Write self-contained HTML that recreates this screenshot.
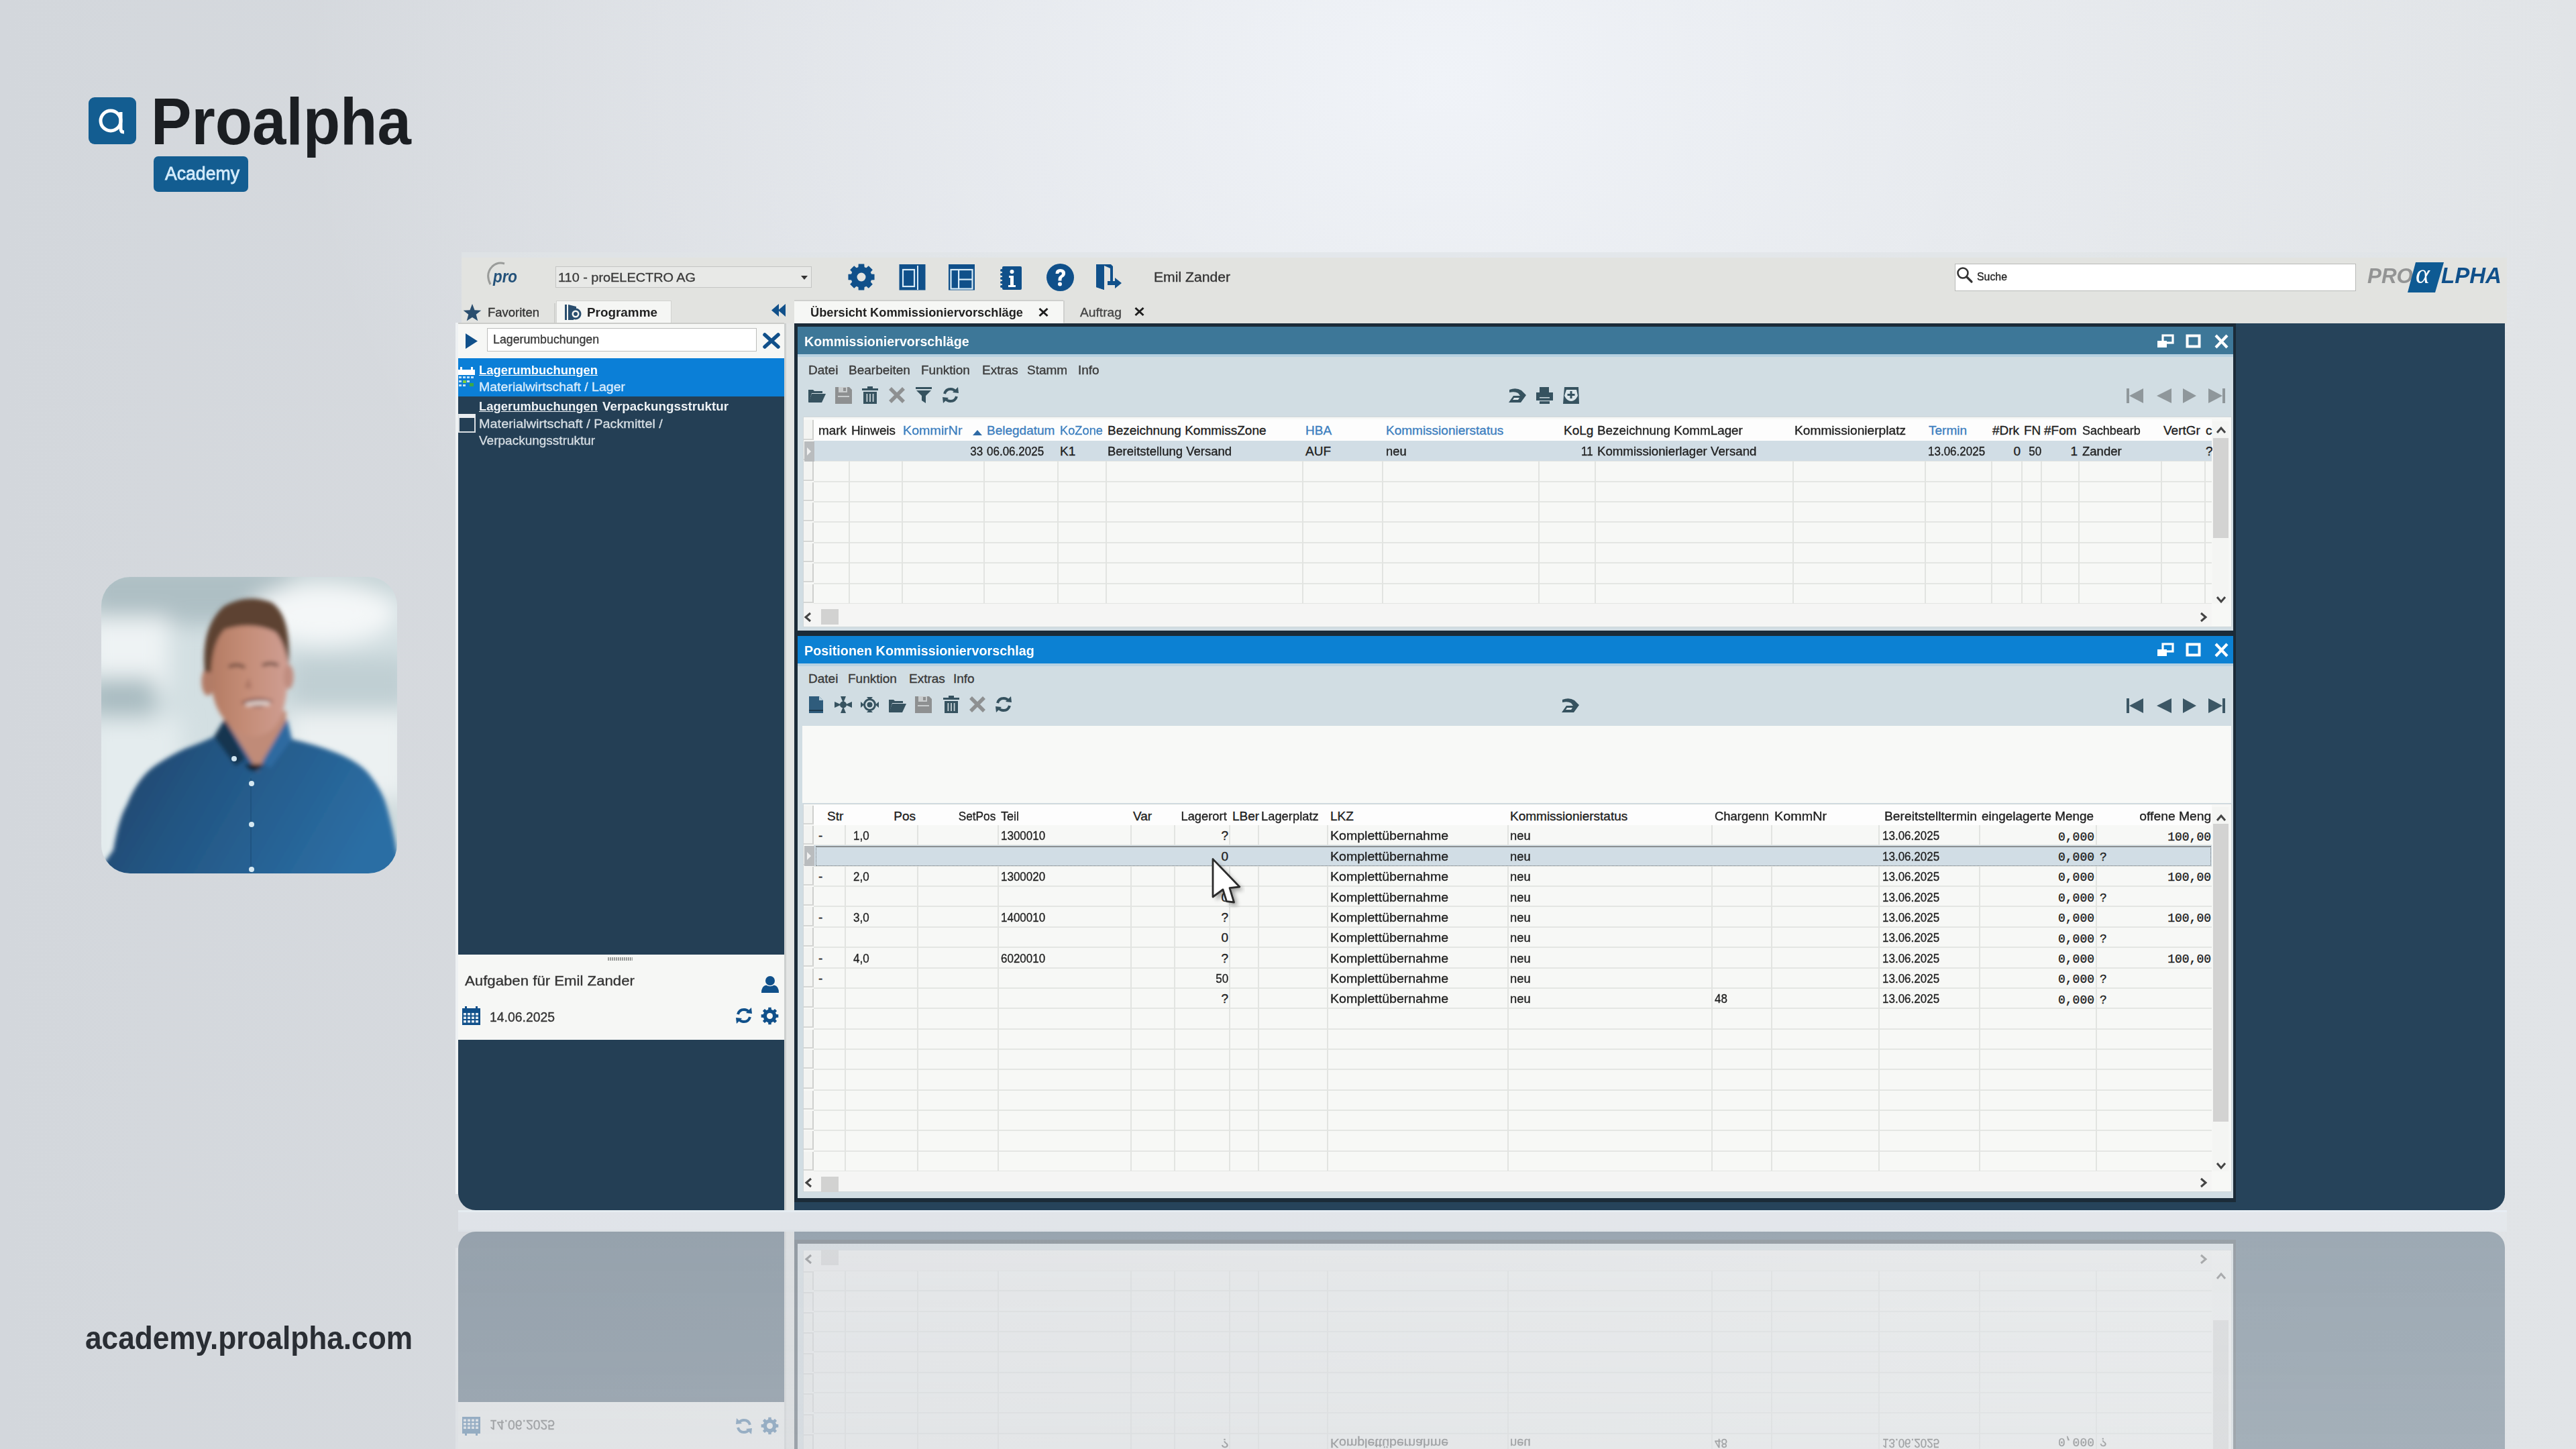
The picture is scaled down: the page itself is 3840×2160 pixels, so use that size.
<!DOCTYPE html><html><head><meta charset="utf-8"><style>
html,body{margin:0;padding:0;}
body{width:3840px;height:2160px;overflow:hidden;position:relative;
background:radial-gradient(ellipse 1700px 1300px at 2150px 120px,rgba(240,243,248,1) 0%,rgba(240,243,248,0) 100%),linear-gradient(90deg,#d3d7dc 0%,#d9dce0 35%,#dee1e4 70%,#e1e4e7 100%);
font-family:"Liberation Sans",sans-serif;}
.t{position:absolute;white-space:nowrap;line-height:1;color:#1e1e1e;-webkit-text-stroke:0.35px currentColor;}
.r{position:absolute;}
#app{position:absolute;left:0;top:0;width:3840px;height:1807px;}
#refl{position:absolute;left:0;top:1833px;width:3840px;height:327px;overflow:hidden;}
#refl .in{position:absolute;left:0;top:0;width:3840px;height:1807px;transform-origin:0 0;transform:translateY(1807px) scaleY(-1);opacity:.36;
-webkit-mask-image:linear-gradient(to bottom,rgba(0,0,0,.5) 0%,rgba(0,0,0,.88) 81%,#000 100%);mask-image:linear-gradient(to bottom,rgba(0,0,0,.5) 0%,rgba(0,0,0,.88) 81%,#000 100%);}
</style></head><body>
<div class="r" style="left:132px;top:145px;width:71px;height:70px;background:#135d91;border-radius:9px;"></div>
<svg class="r" style="left:132px;top:145px;" width="71" height="70" viewBox="0 0 71 70"><circle cx="33" cy="35" r="15" fill="none" stroke="#fff" stroke-width="5"/><path d="M48 22 V47 Q48 52 53 52" fill="none" stroke="#fff" stroke-width="5"/></svg>
<div class="t" style="top:132.0px;font-size:98px;left:225.0px;color:#1b1e22;font-weight:700;-webkit-text-stroke:0;transform:scaleX(0.925);transform-origin:left 0;">Proalpha</div>
<div class="r" style="left:229px;top:233px;width:141px;height:53px;background:#135d91;border-radius:7px;"></div>
<div class="t" style="top:246.1px;font-size:27px;left:246.0px;color:#d3ebfb;transform:scaleX(0.986);transform-origin:left 0;-webkit-text-stroke:0.8px #d3ebfb;">Academy</div>
<div class="t" style="top:1969.5px;font-size:49px;left:127.0px;color:#2a2e34;font-weight:700;-webkit-text-stroke:0;transform:scaleX(0.902);transform-origin:left 0;">academy.proalpha.com</div>
<svg class="r" style="left:151px;top:860px" width="441" height="442" viewBox="0 0 441 442">
<defs><clipPath id="vc"><rect x="0" y="0" width="441" height="442" rx="43"/></clipPath>
<filter id="bl" x="-20%" y="-20%" width="140%" height="140%"><feGaussianBlur stdDeviation="16"/></filter>
<filter id="bl2" x="-10%" y="-10%" width="120%" height="120%"><feGaussianBlur stdDeviation="3"/></filter>
<linearGradient id="sh" x1="0" y1="0" x2="1" y2="0.3"><stop offset="0" stop-color="#1c3f63"/><stop offset=".45" stop-color="#235684"/><stop offset="1" stop-color="#2b6ea4"/></linearGradient>
<linearGradient id="face" x1="0" y1="0" x2="1" y2="0"><stop offset="0" stop-color="#b27a62"/><stop offset=".45" stop-color="#c48c76"/><stop offset="1" stop-color="#cf9e93"/></linearGradient>
</defs>
<g clip-path="url(#vc)">
<rect x="0" y="0" width="441" height="442" fill="#d3dfe2"/>
<g filter="url(#bl)">
<rect x="-20" y="-20" width="300" height="90" fill="#aebfc4"/><rect x="280" y="-20" width="200" height="40" fill="#c5d3d6"/>
<rect x="-20" y="60" width="120" height="110" fill="#eef3f4"/>
<rect x="-20" y="150" width="100" height="60" fill="#a9bcc1"/>
<rect x="-20" y="210" width="140" height="240" fill="#e4ecee"/>
<ellipse cx="330" cy="55" rx="110" ry="45" fill="#f4f7f8"/>
<rect x="280" y="120" width="180" height="80" fill="#c0cfd3"/>
<rect x="280" y="200" width="180" height="140" fill="#ecf1f2"/>
<rect x="380" y="330" width="80" height="120" fill="#cfdadc"/>
</g>
<g filter="url(#bl2)">
<path d="M184 200 Q186 250 203 275 L233 292 L258 275 Q274 250 276 200 Z" fill="#c08b78"/>
<path d="M-20 460 L18 407 Q26 360 38 340 Q55 298 82 280 Q105 265 125 256 Q152 246 168 238 L184 212 L233 290 L277 212 L284 242 Q320 250 350 262 Q385 276 400 295 Q420 320 426 344 Q436 380 440 407 L460 460 Z" fill="url(#sh)"/>
<path d="M184 212 L168 238 L200 282 L215 272 Z" fill="#17344f"/>
<path d="M277 212 L284 242 L252 285 L240 275 Z" fill="#2f6ba0"/>
<path d="M213 279 Q227 300 242 279 Z" fill="#121c26"/>
<g transform="translate(220,0) scale(0.94,1) translate(-220,0)"><path d="M158 92 Q152 150 168 192 Q188 234 228 238 Q264 234 274 200 Q286 160 281 92 Q252 52 220 52 Q182 52 158 92 Z" fill="url(#face)"/>
<ellipse cx="155" cy="156" rx="10" ry="21" fill="#b27b66"/>
<ellipse cx="283" cy="149" rx="8" ry="18" fill="#c08d80"/>
<path d="M150 142 Q143 75 180 44 Q216 24 256 38 Q288 58 283 132 Q276 96 262 82 Q226 66 182 78 Q162 96 160 142 Z" fill="#5d4233"/>
</g><path d="M190 134 Q202 128 214 135" stroke="#5a3a30" stroke-width="4" fill="none"/>
<path d="M240 132 Q252 126 264 132" stroke="#5a3a30" stroke-width="4" fill="none"/>
<path d="M220 150 L224 165 Q218 168 214 164 Z" fill="#9e6a5a" opacity=".7"/>
<path d="M208 187 Q232 176 256 185 Q236 202 208 187 Z" fill="#6f3533"/>
<path d="M214 188 Q234 182 252 186 L250 192 Q234 190 216 193 Z" fill="#e5d6d0"/>
</g>
<rect x="222" y="300" width="2" height="150" fill="#1d4c78" opacity=".6"/>
<circle cx="198" cy="271" r="4" fill="#cfe3ee"/><circle cx="224" cy="308" r="4" fill="#d5e8f2"/><circle cx="224" cy="369" r="4" fill="#d5e8f2"/><circle cx="224" cy="436" r="4" fill="#d5e8f2"/>
</g></svg>
<div id="app">
<div class="r" style="left:688.0px;top:376.0px;width:3049.0px;height:8.0px;background:rgba(224,228,231,.7);"></div>
<div class="r" style="left:688.0px;top:384.0px;width:3049.0px;height:98.0px;background:#e2e3e0;"></div>
<div class="r" style="left:826.0px;top:452.0px;width:2.0px;height:29.0px;background:#cfd0cd;"></div>
<div class="r" style="left:829.0px;top:448.0px;width:172.0px;height:34.0px;background:#f5f6f4;border:1px solid #d2d3d0;border-bottom:none;box-sizing:border-box;"></div>
<div class="t" style="top:455.9px;font-size:19px;left:727.0px;color:#333;transform:scaleX(0.972);transform-origin:left 0;">Favoriten</div>
<div class="t" style="top:455.9px;font-size:19px;left:875.0px;color:#222;font-weight:700;-webkit-text-stroke:0;transform:scaleX(0.994);transform-origin:left 0;">Programme</div>
<div class="r" style="left:683.0px;top:481.0px;width:486.0px;height:53.0px;background:#f6f7f5;border-top:2px solid #cbccc9;box-sizing:border-box;"></div>
<div class="r" style="left:726.0px;top:489.0px;width:402.0px;height:35.0px;background:#ffffff;border:1px solid #bcbdbb;box-sizing:border-box;"></div>
<div class="t" style="top:496.8px;font-size:18px;left:735.0px;color:#3a3a3a;transform:scaleX(0.987);transform-origin:left 0;">Lagerumbuchungen</div>
<div class="r" style="left:683.0px;top:534.0px;width:486.0px;height:57.0px;background:#0b7fd7;"></div>
<div class="t" style="top:541.9px;font-size:19px;left:714.0px;color:#ffffff;font-weight:700;-webkit-text-stroke:0;transform:scaleX(0.969);transform-origin:left 0;text-decoration:underline;">Lagerumbuchungen</div>
<div class="t" style="top:566.9px;font-size:19px;left:714.0px;color:#d8ebfb;transform:scaleX(1.027);transform-origin:left 0;">Materialwirtschaft / Lager</div>
<div class="r" style="left:683.0px;top:591.0px;width:486.0px;height:832.0px;background:#243f55;"></div>
<div class="t" style="top:595.9px;font-size:19px;left:714.0px;color:#eef2f5;font-weight:700;-webkit-text-stroke:0;transform:scaleX(0.969);transform-origin:left 0;text-decoration:underline;">Lagerumbuchungen</div>
<div class="t" style="top:595.9px;font-size:19px;left:898.0px;color:#eef2f5;font-weight:700;-webkit-text-stroke:0;transform:scaleX(0.989);transform-origin:left 0;">Verpackungsstruktur</div>
<div class="t" style="top:621.9px;font-size:19px;left:714.0px;color:#d5dde3;transform:scaleX(1.046);transform-origin:left 0;">Materialwirtschaft / Packmittel /</div>
<div class="t" style="top:646.9px;font-size:19px;left:714.0px;color:#d5dde3;">Verpackungsstruktur</div>
<div class="r" style="left:683.0px;top:1423.0px;width:486.0px;height:127.0px;background:#f6f7f5;"></div>
<div class="r" style="left:906.0px;top:1427.0px;width:37.0px;height:5.0px;background:repeating-linear-gradient(90deg,#9a9c9a 0 2px,transparent 2px 3px);"></div>
<div class="t" style="top:1451.2px;font-size:21px;left:693.0px;color:#333;transform:scaleX(1.057);transform-origin:left 0;">Aufgaben für Emil Zander</div>
<div class="t" style="top:1506.1px;font-size:20px;left:730.0px;color:#333;transform:scaleX(0.969);transform-origin:left 0;">14.06.2025</div>
<div class="r" style="left:683.0px;top:1550.0px;width:486.0px;height:254.0px;background:#243f55;border-bottom-left-radius:26px;"></div>
<div class="r" style="left:679.0px;top:481.0px;width:4.0px;height:1299.0px;background:rgba(246,248,250,.75);"></div>
<div class="r" style="left:1169.0px;top:482.0px;width:3.0px;height:1322.0px;background:#cdd0cf;"></div>
<div class="r" style="left:1172.0px;top:482.0px;width:12.0px;height:1322.0px;background:#e3e5e4;"></div>
<div class="r" style="left:1184.0px;top:482.0px;width:2550.0px;height:1322.0px;background:#26435a;border-bottom-right-radius:24px;"></div>
<div class="r" style="left:1184.0px;top:448.0px;width:401.0px;height:34.0px;background:#f6f7f5;"></div>
<div class="r" style="left:1184.0px;top:447.0px;width:401.0px;height:2.0px;background:#cfd0ce;"></div>
<div class="r" style="left:1585.0px;top:448.0px;width:2.0px;height:33.0px;background:#cfd0ce;"></div>
<div class="t" style="top:455.9px;font-size:19px;left:1208.0px;color:#222;font-weight:700;-webkit-text-stroke:0;transform:scaleX(0.959);transform-origin:left 0;">Übersicht Kommissioniervorschläge</div>
<div class="t" style="top:455.9px;font-size:19px;left:1610.0px;color:#444;transform:scaleX(1.012);transform-origin:left 0;">Auftrag</div>
<div class="r" style="left:828.0px;top:397.0px;width:382.0px;height:32.0px;background:#e8e9e7;border:1px solid #c4c5c3;box-sizing:border-box;"></div>
<div class="t" style="top:404.4px;font-size:19px;left:832.0px;color:#3b3b3b;transform:scaleX(1.046);transform-origin:left 0;">110 - proELECTRO AG</div>
<div class="t" style="top:403.1px;font-size:20px;left:1720.0px;color:#333;transform:scaleX(1.057);transform-origin:left 0;">Emil Zander</div>
<div class="r" style="left:2914.0px;top:393.0px;width:598.0px;height:41.0px;background:#ffffff;border:1px solid #b9bab8;box-sizing:border-box;"></div>
<div class="t" style="top:403.6px;font-size:17px;left:2947.0px;color:#222;transform:scaleX(0.934);transform-origin:left 0;">Suche</div>
<div class="r" style="left:1184.0px;top:482.0px;width:2149.0px;height:466.0px;background:#1b2b38;"></div>
<div class="r" style="left:1189.0px;top:487.0px;width:2140.0px;height:453.0px;background:#d1dde3;"></div>
<div class="r" style="left:1189.0px;top:487.0px;width:2140.0px;height:41.0px;background:#3d7798;"></div>
<div class="r" style="left:1189.0px;top:528.0px;width:2140.0px;height:4.0px;background:#b7d1e1;"></div>
<div class="t" style="top:499.1px;font-size:20px;left:1199.0px;color:#ffffff;font-weight:700;-webkit-text-stroke:0;transform:scaleX(0.982);transform-origin:left 0;">Kommissioniervorschläge</div>
<div class="r" style="left:1184.0px;top:943.0px;width:2149.0px;height:849.0px;background:#1b2b38;"></div>
<div class="r" style="left:1189.0px;top:948.0px;width:2140.0px;height:838.0px;background:#d1dde3;"></div>
<div class="r" style="left:1189.0px;top:948.0px;width:2140.0px;height:41.0px;background:#0c81d3;"></div>
<div class="r" style="left:1189.0px;top:989.0px;width:2140.0px;height:4.0px;background:#b7d1e1;"></div>
<div class="t" style="top:960.1px;font-size:20px;left:1199.0px;color:#ffffff;font-weight:700;-webkit-text-stroke:0;transform:scaleX(0.989);transform-origin:left 0;">Positionen Kommissioniervorschlag</div>
<div class="r" style="left:683.0px;top:1804.0px;width:3054.0px;height:3.0px;background:rgba(232,238,244,.85);"></div>
<div class="r" style="left:683.0px;top:1807.0px;width:3054.0px;height:26.0px;background:rgba(232,235,240,.55);"></div>
<div class="t" style="top:541.9px;font-size:19px;left:1205.0px;color:#3a3a3a;">Datei</div>
<div class="t" style="top:541.9px;font-size:19px;left:1265.0px;color:#3a3a3a;">Bearbeiten</div>
<div class="t" style="top:541.9px;font-size:19px;left:1373.0px;color:#3a3a3a;">Funktion</div>
<div class="t" style="top:541.9px;font-size:19px;left:1464.0px;color:#3a3a3a;">Extras</div>
<div class="t" style="top:541.9px;font-size:19px;left:1531.0px;color:#3a3a3a;">Stamm</div>
<div class="t" style="top:541.9px;font-size:19px;left:1607.0px;color:#3a3a3a;">Info</div>
<div class="t" style="top:1001.9px;font-size:19px;left:1205.0px;color:#3a3a3a;">Datei</div>
<div class="t" style="top:1001.9px;font-size:19px;left:1264.0px;color:#3a3a3a;">Funktion</div>
<div class="t" style="top:1001.9px;font-size:19px;left:1355.0px;color:#3a3a3a;">Extras</div>
<div class="t" style="top:1001.9px;font-size:19px;left:1421.0px;color:#3a3a3a;">Info</div>
<div class="r" style="left:1197.0px;top:621.0px;width:2130.0px;height:314.0px;background:#f7f8f6;border:1px solid #cfd6d9;box-sizing:border-box;"></div>
<div class="r" style="left:1213.0px;top:625.0px;width:2084.0px;height:32.0px;background:#fdfdfd;"></div>
<div class="r" style="left:1198.0px;top:626.0px;width:15.0px;height:30.0px;background:#f3f4f2;border-right:2px solid #cfd0ce;border-bottom:2px solid #d6d7d5;box-sizing:border-box;"></div>
<div class="r" style="left:1198.0px;top:658.0px;width:15.0px;height:28.4px;background:#f3f4f2;border-right:2px solid #cfd0ce;border-bottom:2px solid #d6d7d5;box-sizing:border-box;"></div>
<div class="r" style="left:1198.0px;top:688.4px;width:15.0px;height:28.4px;background:#f3f4f2;border-right:2px solid #cfd0ce;border-bottom:2px solid #d6d7d5;box-sizing:border-box;"></div>
<div class="r" style="left:1198.0px;top:718.7px;width:15.0px;height:28.4px;background:#f3f4f2;border-right:2px solid #cfd0ce;border-bottom:2px solid #d6d7d5;box-sizing:border-box;"></div>
<div class="r" style="left:1198.0px;top:749.0px;width:15.0px;height:28.4px;background:#f3f4f2;border-right:2px solid #cfd0ce;border-bottom:2px solid #d6d7d5;box-sizing:border-box;"></div>
<div class="r" style="left:1198.0px;top:779.4px;width:15.0px;height:28.4px;background:#f3f4f2;border-right:2px solid #cfd0ce;border-bottom:2px solid #d6d7d5;box-sizing:border-box;"></div>
<div class="r" style="left:1198.0px;top:809.8px;width:15.0px;height:28.4px;background:#f3f4f2;border-right:2px solid #cfd0ce;border-bottom:2px solid #d6d7d5;box-sizing:border-box;"></div>
<div class="r" style="left:1198.0px;top:840.1px;width:15.0px;height:28.4px;background:#f3f4f2;border-right:2px solid #cfd0ce;border-bottom:2px solid #d6d7d5;box-sizing:border-box;"></div>
<div class="r" style="left:1198.0px;top:870.5px;width:15.0px;height:28.4px;background:#f3f4f2;border-right:2px solid #cfd0ce;border-bottom:2px solid #d6d7d5;box-sizing:border-box;"></div>
<div class="r" style="left:1213.0px;top:686.4px;width:2084.0px;height:2.0px;background:#e4e6e3;"></div>
<div class="r" style="left:1213.0px;top:716.7px;width:2084.0px;height:2.0px;background:#e4e6e3;"></div>
<div class="r" style="left:1213.0px;top:747.0px;width:2084.0px;height:2.0px;background:#e4e6e3;"></div>
<div class="r" style="left:1213.0px;top:777.4px;width:2084.0px;height:2.0px;background:#e4e6e3;"></div>
<div class="r" style="left:1213.0px;top:807.8px;width:2084.0px;height:2.0px;background:#e4e6e3;"></div>
<div class="r" style="left:1213.0px;top:838.1px;width:2084.0px;height:2.0px;background:#e4e6e3;"></div>
<div class="r" style="left:1213.0px;top:868.5px;width:2084.0px;height:2.0px;background:#e4e6e3;"></div>
<div class="r" style="left:1213.0px;top:898.8px;width:2084.0px;height:2.0px;background:#e4e6e3;"></div>
<div class="r" style="left:1265.0px;top:657.0px;width:2.0px;height:242.8px;background:#e2e4e1;"></div>
<div class="r" style="left:1344.0px;top:657.0px;width:2.0px;height:242.8px;background:#e2e4e1;"></div>
<div class="r" style="left:1466.0px;top:657.0px;width:2.0px;height:242.8px;background:#e2e4e1;"></div>
<div class="r" style="left:1576.0px;top:657.0px;width:2.0px;height:242.8px;background:#e2e4e1;"></div>
<div class="r" style="left:1648.0px;top:657.0px;width:2.0px;height:242.8px;background:#e2e4e1;"></div>
<div class="r" style="left:1941.0px;top:657.0px;width:2.0px;height:242.8px;background:#e2e4e1;"></div>
<div class="r" style="left:2060.0px;top:657.0px;width:2.0px;height:242.8px;background:#e2e4e1;"></div>
<div class="r" style="left:2293.0px;top:657.0px;width:2.0px;height:242.8px;background:#e2e4e1;"></div>
<div class="r" style="left:2377.0px;top:657.0px;width:2.0px;height:242.8px;background:#e2e4e1;"></div>
<div class="r" style="left:2672.0px;top:657.0px;width:2.0px;height:242.8px;background:#e2e4e1;"></div>
<div class="r" style="left:2869.0px;top:657.0px;width:2.0px;height:242.8px;background:#e2e4e1;"></div>
<div class="r" style="left:2968.0px;top:657.0px;width:2.0px;height:242.8px;background:#e2e4e1;"></div>
<div class="r" style="left:3013.0px;top:657.0px;width:2.0px;height:242.8px;background:#e2e4e1;"></div>
<div class="r" style="left:3042.0px;top:657.0px;width:2.0px;height:242.8px;background:#e2e4e1;"></div>
<div class="r" style="left:3098.0px;top:657.0px;width:2.0px;height:242.8px;background:#e2e4e1;"></div>
<div class="r" style="left:3221.0px;top:657.0px;width:2.0px;height:242.8px;background:#e2e4e1;"></div>
<div class="r" style="left:3286.0px;top:657.0px;width:2.0px;height:242.8px;background:#e2e4e1;"></div>
<div class="r" style="left:1213.0px;top:657.0px;width:2084.0px;height:30.4px;background:#d1dde5;"></div>
<div class="t" style="top:631.9px;font-size:19px;left:1220.0px;transform:scaleX(0.995);transform-origin:left 0;">mark</div>
<div class="t" style="top:631.9px;font-size:19px;left:1269.0px;transform:scaleX(0.992);transform-origin:left 0;">Hinweis</div>
<div class="t" style="top:631.9px;font-size:19px;left:1346.0px;color:#3d7fbf;transform:scaleX(1.037);transform-origin:left 0;">KommirNr</div>
<div class="t" style="top:631.9px;font-size:19px;left:1471.0px;color:#3d7fbf;">Belegdatum</div>
<div class="t" style="top:631.9px;font-size:19px;left:1580.0px;color:#3d7fbf;transform:scaleX(0.962);transform-origin:left 0;">KoZone</div>
<div class="t" style="top:631.9px;font-size:19px;left:1651.0px;">Bezeichnung KommissZone</div>
<div class="t" style="top:631.9px;font-size:19px;left:1946.0px;color:#3d7fbf;">HBA</div>
<div class="t" style="top:631.9px;font-size:19px;left:2066.0px;color:#3d7fbf;">Kommissionierstatus</div>
<div class="t" style="top:631.9px;font-size:19px;left:2331.0px;">KoLg</div>
<div class="t" style="top:631.9px;font-size:19px;left:2381.0px;transform:scaleX(0.992);transform-origin:left 0;">Bezeichnung KommLager</div>
<div class="t" style="top:631.9px;font-size:19px;left:2675.0px;transform:scaleX(1.008);transform-origin:left 0;">Kommissionierplatz</div>
<div class="t" style="top:631.9px;font-size:19px;left:2875.0px;color:#3d7fbf;">Termin</div>
<div class="t" style="top:631.9px;font-size:19px;left:2970.0px;">#Drk</div>
<div class="t" style="top:631.9px;font-size:19px;left:3017.0px;">FN</div>
<div class="t" style="top:631.9px;font-size:19px;left:3047.0px;">#Fom</div>
<div class="t" style="top:631.9px;font-size:19px;left:3104.0px;transform:scaleX(0.943);transform-origin:left 0;">Sachbearb</div>
<div class="t" style="top:631.9px;font-size:19px;left:3225.0px;">VertGr</div>
<div class="t" style="top:631.9px;font-size:19px;left:3288.0px;">c</div>
<div class="t" style="top:663.4px;font-size:19px;right:2375.0px;transform:scaleX(0.895);transform-origin:right 0;">33</div>
<div class="t" style="top:663.4px;font-size:19px;left:1471.0px;transform:scaleX(0.895);transform-origin:left 0;">06.06.2025</div>
<div class="t" style="top:663.4px;font-size:19px;left:1580.0px;">K1</div>
<div class="t" style="top:663.4px;font-size:19px;left:1651.0px;transform:scaleX(0.973);transform-origin:left 0;">Bereitstellung Versand</div>
<div class="t" style="top:663.4px;font-size:19px;left:1946.0px;">AUF</div>
<div class="t" style="top:663.4px;font-size:19px;left:2066.0px;transform:scaleX(0.965);transform-origin:left 0;">neu</div>
<div class="t" style="top:663.4px;font-size:19px;right:1465.0px;transform:scaleX(0.895);transform-origin:right 0;">11</div>
<div class="t" style="top:663.4px;font-size:19px;left:2381.0px;transform:scaleX(0.982);transform-origin:left 0;">Kommissionierlager Versand</div>
<div class="t" style="top:663.4px;font-size:19px;left:2874.0px;transform:scaleX(0.895);transform-origin:left 0;">13.06.2025</div>
<div class="t" style="top:663.4px;font-size:19px;right:828.0px;">0</div>
<div class="t" style="top:663.4px;font-size:19px;right:797.0px;transform:scaleX(0.895);transform-origin:right 0;">50</div>
<div class="t" style="top:663.4px;font-size:19px;right:743.0px;">1</div>
<div class="t" style="top:663.4px;font-size:19px;left:3104.0px;transform:scaleX(0.975);transform-origin:left 0;">Zander</div>
<div class="t" style="top:663.4px;font-size:19px;left:3288.0px;">?</div>
<div class="r" style="left:3298.0px;top:628.0px;width:24.0px;height:271.8px;background:#f4f5f3;"></div>
<div class="r" style="left:3299.0px;top:653.0px;width:23.0px;height:149.0px;background:#d3d3d2;"></div>
<div class="r" style="left:1198.0px;top:899.8px;width:2099.0px;height:33.2px;background:#f5f5f4;"></div>
<div class="r" style="left:1224.0px;top:907.8px;width:26.0px;height:23.0px;background:#d2d2d1;"></div>
<div class="r" style="left:1196.0px;top:1082.0px;width:2130.0px;height:115.0px;background:#f8f9f7;"></div>
<div class="r" style="left:1197.0px;top:1198.0px;width:2130.0px;height:579.0px;background:#f7f8f6;border:1px solid #cfd6d9;box-sizing:border-box;"></div>
<div class="r" style="left:1213.0px;top:1200.0px;width:2084.0px;height:30.0px;background:#fdfdfd;"></div>
<div class="r" style="left:1198.0px;top:1201.0px;width:15.0px;height:28.0px;background:#f3f4f2;border-right:2px solid #cfd0ce;border-bottom:2px solid #d6d7d5;box-sizing:border-box;"></div>
<div class="r" style="left:1198.0px;top:1231.0px;width:15.0px;height:28.3px;background:#f3f4f2;border-right:2px solid #cfd0ce;border-bottom:2px solid #d6d7d5;box-sizing:border-box;"></div>
<div class="r" style="left:1198.0px;top:1261.3px;width:15.0px;height:28.3px;background:#f3f4f2;border-right:2px solid #cfd0ce;border-bottom:2px solid #d6d7d5;box-sizing:border-box;"></div>
<div class="r" style="left:1198.0px;top:1291.7px;width:15.0px;height:28.3px;background:#f3f4f2;border-right:2px solid #cfd0ce;border-bottom:2px solid #d6d7d5;box-sizing:border-box;"></div>
<div class="r" style="left:1198.0px;top:1322.0px;width:15.0px;height:28.3px;background:#f3f4f2;border-right:2px solid #cfd0ce;border-bottom:2px solid #d6d7d5;box-sizing:border-box;"></div>
<div class="r" style="left:1198.0px;top:1352.4px;width:15.0px;height:28.3px;background:#f3f4f2;border-right:2px solid #cfd0ce;border-bottom:2px solid #d6d7d5;box-sizing:border-box;"></div>
<div class="r" style="left:1198.0px;top:1382.8px;width:15.0px;height:28.3px;background:#f3f4f2;border-right:2px solid #cfd0ce;border-bottom:2px solid #d6d7d5;box-sizing:border-box;"></div>
<div class="r" style="left:1198.0px;top:1413.1px;width:15.0px;height:28.3px;background:#f3f4f2;border-right:2px solid #cfd0ce;border-bottom:2px solid #d6d7d5;box-sizing:border-box;"></div>
<div class="r" style="left:1198.0px;top:1443.5px;width:15.0px;height:28.3px;background:#f3f4f2;border-right:2px solid #cfd0ce;border-bottom:2px solid #d6d7d5;box-sizing:border-box;"></div>
<div class="r" style="left:1198.0px;top:1473.8px;width:15.0px;height:28.3px;background:#f3f4f2;border-right:2px solid #cfd0ce;border-bottom:2px solid #d6d7d5;box-sizing:border-box;"></div>
<div class="r" style="left:1198.0px;top:1504.2px;width:15.0px;height:28.3px;background:#f3f4f2;border-right:2px solid #cfd0ce;border-bottom:2px solid #d6d7d5;box-sizing:border-box;"></div>
<div class="r" style="left:1198.0px;top:1534.5px;width:15.0px;height:28.3px;background:#f3f4f2;border-right:2px solid #cfd0ce;border-bottom:2px solid #d6d7d5;box-sizing:border-box;"></div>
<div class="r" style="left:1198.0px;top:1564.8px;width:15.0px;height:28.3px;background:#f3f4f2;border-right:2px solid #cfd0ce;border-bottom:2px solid #d6d7d5;box-sizing:border-box;"></div>
<div class="r" style="left:1198.0px;top:1595.2px;width:15.0px;height:28.3px;background:#f3f4f2;border-right:2px solid #cfd0ce;border-bottom:2px solid #d6d7d5;box-sizing:border-box;"></div>
<div class="r" style="left:1198.0px;top:1625.5px;width:15.0px;height:28.3px;background:#f3f4f2;border-right:2px solid #cfd0ce;border-bottom:2px solid #d6d7d5;box-sizing:border-box;"></div>
<div class="r" style="left:1198.0px;top:1655.9px;width:15.0px;height:28.3px;background:#f3f4f2;border-right:2px solid #cfd0ce;border-bottom:2px solid #d6d7d5;box-sizing:border-box;"></div>
<div class="r" style="left:1198.0px;top:1686.2px;width:15.0px;height:28.3px;background:#f3f4f2;border-right:2px solid #cfd0ce;border-bottom:2px solid #d6d7d5;box-sizing:border-box;"></div>
<div class="r" style="left:1198.0px;top:1716.6px;width:15.0px;height:28.3px;background:#f3f4f2;border-right:2px solid #cfd0ce;border-bottom:2px solid #d6d7d5;box-sizing:border-box;"></div>
<div class="r" style="left:1213.0px;top:1259.3px;width:2084.0px;height:2.0px;background:#e4e6e3;"></div>
<div class="r" style="left:1213.0px;top:1289.7px;width:2084.0px;height:2.0px;background:#e4e6e3;"></div>
<div class="r" style="left:1213.0px;top:1320.0px;width:2084.0px;height:2.0px;background:#e4e6e3;"></div>
<div class="r" style="left:1213.0px;top:1350.4px;width:2084.0px;height:2.0px;background:#e4e6e3;"></div>
<div class="r" style="left:1213.0px;top:1380.8px;width:2084.0px;height:2.0px;background:#e4e6e3;"></div>
<div class="r" style="left:1213.0px;top:1411.1px;width:2084.0px;height:2.0px;background:#e4e6e3;"></div>
<div class="r" style="left:1213.0px;top:1441.5px;width:2084.0px;height:2.0px;background:#e4e6e3;"></div>
<div class="r" style="left:1213.0px;top:1471.8px;width:2084.0px;height:2.0px;background:#e4e6e3;"></div>
<div class="r" style="left:1213.0px;top:1502.2px;width:2084.0px;height:2.0px;background:#e4e6e3;"></div>
<div class="r" style="left:1213.0px;top:1532.5px;width:2084.0px;height:2.0px;background:#e4e6e3;"></div>
<div class="r" style="left:1213.0px;top:1562.8px;width:2084.0px;height:2.0px;background:#e4e6e3;"></div>
<div class="r" style="left:1213.0px;top:1593.2px;width:2084.0px;height:2.0px;background:#e4e6e3;"></div>
<div class="r" style="left:1213.0px;top:1623.5px;width:2084.0px;height:2.0px;background:#e4e6e3;"></div>
<div class="r" style="left:1213.0px;top:1653.9px;width:2084.0px;height:2.0px;background:#e4e6e3;"></div>
<div class="r" style="left:1213.0px;top:1684.2px;width:2084.0px;height:2.0px;background:#e4e6e3;"></div>
<div class="r" style="left:1213.0px;top:1714.6px;width:2084.0px;height:2.0px;background:#e4e6e3;"></div>
<div class="r" style="left:1213.0px;top:1745.0px;width:2084.0px;height:2.0px;background:#e4e6e3;"></div>
<div class="r" style="left:1259.0px;top:1230.0px;width:2.0px;height:516.0px;background:#e2e4e1;"></div>
<div class="r" style="left:1367.0px;top:1230.0px;width:2.0px;height:516.0px;background:#e2e4e1;"></div>
<div class="r" style="left:1487.0px;top:1230.0px;width:2.0px;height:516.0px;background:#e2e4e1;"></div>
<div class="r" style="left:1685.0px;top:1230.0px;width:2.0px;height:516.0px;background:#e2e4e1;"></div>
<div class="r" style="left:1750.0px;top:1230.0px;width:2.0px;height:516.0px;background:#e2e4e1;"></div>
<div class="r" style="left:1832.0px;top:1230.0px;width:2.0px;height:516.0px;background:#e2e4e1;"></div>
<div class="r" style="left:1875.0px;top:1230.0px;width:2.0px;height:516.0px;background:#e2e4e1;"></div>
<div class="r" style="left:1978.0px;top:1230.0px;width:2.0px;height:516.0px;background:#e2e4e1;"></div>
<div class="r" style="left:2247.0px;top:1230.0px;width:2.0px;height:516.0px;background:#e2e4e1;"></div>
<div class="r" style="left:2551.0px;top:1230.0px;width:2.0px;height:516.0px;background:#e2e4e1;"></div>
<div class="r" style="left:2640.0px;top:1230.0px;width:2.0px;height:516.0px;background:#e2e4e1;"></div>
<div class="r" style="left:2800.0px;top:1230.0px;width:2.0px;height:516.0px;background:#e2e4e1;"></div>
<div class="r" style="left:2950.0px;top:1230.0px;width:2.0px;height:516.0px;background:#e2e4e1;"></div>
<div class="r" style="left:3124.0px;top:1230.0px;width:2.0px;height:516.0px;background:#e2e4e1;"></div>
<div class="r" style="left:1213.0px;top:1260.3px;width:2084.0px;height:30.4px;background:#d1dde5;"></div>
<div class="t" style="top:1206.9px;font-size:19px;left:1233.0px;">Str</div>
<div class="t" style="top:1206.9px;font-size:19px;right:2475.0px;">Pos</div>
<div class="t" style="top:1206.9px;font-size:19px;right:2356.0px;transform:scaleX(0.908);transform-origin:right 0;">SetPos</div>
<div class="t" style="top:1206.9px;font-size:19px;left:1492.0px;transform:scaleX(0.947);transform-origin:left 0;">Teil</div>
<div class="t" style="top:1206.9px;font-size:19px;left:1689.0px;">Var</div>
<div class="t" style="top:1206.9px;font-size:19px;right:2011.0px;transform:scaleX(0.965);transform-origin:right 0;">Lagerort</div>
<div class="t" style="top:1206.9px;font-size:19px;left:1837.0px;">LBer</div>
<div class="t" style="top:1206.9px;font-size:19px;left:1880.0px;transform:scaleX(0.966);transform-origin:left 0;">Lagerplatz</div>
<div class="t" style="top:1206.9px;font-size:19px;left:1983.0px;">LKZ</div>
<div class="t" style="top:1206.9px;font-size:19px;left:2251.0px;">Kommissionierstatus</div>
<div class="t" style="top:1206.9px;font-size:19px;left:2556.0px;transform:scaleX(0.971);transform-origin:left 0;">Chargenn</div>
<div class="t" style="top:1206.9px;font-size:19px;left:2645.0px;transform:scaleX(1.041);transform-origin:left 0;">KommNr</div>
<div class="t" style="top:1206.9px;font-size:19px;left:2809.0px;transform:scaleX(1.013);transform-origin:left 0;">Bereitstelltermin</div>
<div class="t" style="top:1206.9px;font-size:19px;left:2954.0px;transform:scaleX(0.994);transform-origin:left 0;">eingelagerte Menge</div>
<div class="t" style="top:1206.9px;font-size:19px;right:544.0px;transform:scaleX(1.016);transform-origin:right 0;">offene Meng</div>
<div class="t" style="top:1236.4px;font-size:19px;left:1220.0px;">-</div>
<div class="t" style="top:1236.4px;font-size:19px;left:1272.0px;transform:scaleX(0.895);transform-origin:left 0;">1,0</div>
<div class="t" style="top:1236.4px;font-size:19px;left:1492.0px;transform:scaleX(0.895);transform-origin:left 0;">1300010</div>
<div class="t" style="top:1236.4px;font-size:19px;right:2009.0px;">?</div>
<div class="t" style="top:1236.4px;font-size:19px;left:1983.0px;transform:scaleX(1.029);transform-origin:left 0;">Komplettübernahme</div>
<div class="t" style="top:1236.4px;font-size:19px;left:2251.0px;transform:scaleX(0.965);transform-origin:left 0;">neu</div>
<div class="t" style="top:1236.4px;font-size:19px;left:2806.0px;transform:scaleX(0.895);transform-origin:left 0;">13.06.2025</div>
<div class="t" style="top:1238.7px;font-size:18px;right:718.0px;font-family:'Liberation Mono',monospace;">0,000</div>
<div class="t" style="top:1238.7px;font-size:18px;right:544.0px;font-family:'Liberation Mono',monospace;">100,00</div>
<div class="t" style="top:1266.8px;font-size:19px;right:2009.0px;">0</div>
<div class="t" style="top:1266.8px;font-size:19px;left:1983.0px;transform:scaleX(1.029);transform-origin:left 0;">Komplettübernahme</div>
<div class="t" style="top:1266.8px;font-size:19px;left:2251.0px;transform:scaleX(0.965);transform-origin:left 0;">neu</div>
<div class="t" style="top:1266.8px;font-size:19px;left:2806.0px;transform:scaleX(0.895);transform-origin:left 0;">13.06.2025</div>
<div class="t" style="top:1269.1px;font-size:18px;right:718.0px;font-family:'Liberation Mono',monospace;">0,000</div>
<div class="t" style="top:1269.1px;font-size:18px;left:3130.0px;font-family:'Liberation Mono',monospace;">?</div>
<div class="t" style="top:1297.1px;font-size:19px;left:1220.0px;">-</div>
<div class="t" style="top:1297.1px;font-size:19px;left:1272.0px;transform:scaleX(0.895);transform-origin:left 0;">2,0</div>
<div class="t" style="top:1297.1px;font-size:19px;left:1492.0px;transform:scaleX(0.895);transform-origin:left 0;">1300020</div>
<div class="t" style="top:1297.1px;font-size:19px;left:1983.0px;transform:scaleX(1.029);transform-origin:left 0;">Komplettübernahme</div>
<div class="t" style="top:1297.1px;font-size:19px;left:2251.0px;transform:scaleX(0.965);transform-origin:left 0;">neu</div>
<div class="t" style="top:1297.1px;font-size:19px;left:2806.0px;transform:scaleX(0.895);transform-origin:left 0;">13.06.2025</div>
<div class="t" style="top:1299.4px;font-size:18px;right:718.0px;font-family:'Liberation Mono',monospace;">0,000</div>
<div class="t" style="top:1299.4px;font-size:18px;right:544.0px;font-family:'Liberation Mono',monospace;">100,00</div>
<div class="t" style="top:1327.5px;font-size:19px;right:2009.0px;">0</div>
<div class="t" style="top:1327.5px;font-size:19px;left:1983.0px;transform:scaleX(1.029);transform-origin:left 0;">Komplettübernahme</div>
<div class="t" style="top:1327.5px;font-size:19px;left:2251.0px;transform:scaleX(0.965);transform-origin:left 0;">neu</div>
<div class="t" style="top:1327.5px;font-size:19px;left:2806.0px;transform:scaleX(0.895);transform-origin:left 0;">13.06.2025</div>
<div class="t" style="top:1329.8px;font-size:18px;right:718.0px;font-family:'Liberation Mono',monospace;">0,000</div>
<div class="t" style="top:1329.8px;font-size:18px;left:3130.0px;font-family:'Liberation Mono',monospace;">?</div>
<div class="t" style="top:1357.8px;font-size:19px;left:1220.0px;">-</div>
<div class="t" style="top:1357.8px;font-size:19px;left:1272.0px;transform:scaleX(0.895);transform-origin:left 0;">3,0</div>
<div class="t" style="top:1357.8px;font-size:19px;left:1492.0px;transform:scaleX(0.895);transform-origin:left 0;">1400010</div>
<div class="t" style="top:1357.8px;font-size:19px;right:2009.0px;">?</div>
<div class="t" style="top:1357.8px;font-size:19px;left:1983.0px;transform:scaleX(1.029);transform-origin:left 0;">Komplettübernahme</div>
<div class="t" style="top:1357.8px;font-size:19px;left:2251.0px;transform:scaleX(0.965);transform-origin:left 0;">neu</div>
<div class="t" style="top:1357.8px;font-size:19px;left:2806.0px;transform:scaleX(0.895);transform-origin:left 0;">13.06.2025</div>
<div class="t" style="top:1360.1px;font-size:18px;right:718.0px;font-family:'Liberation Mono',monospace;">0,000</div>
<div class="t" style="top:1360.1px;font-size:18px;right:544.0px;font-family:'Liberation Mono',monospace;">100,00</div>
<div class="t" style="top:1388.2px;font-size:19px;right:2009.0px;">0</div>
<div class="t" style="top:1388.2px;font-size:19px;left:1983.0px;transform:scaleX(1.029);transform-origin:left 0;">Komplettübernahme</div>
<div class="t" style="top:1388.2px;font-size:19px;left:2251.0px;transform:scaleX(0.965);transform-origin:left 0;">neu</div>
<div class="t" style="top:1388.2px;font-size:19px;left:2806.0px;transform:scaleX(0.895);transform-origin:left 0;">13.06.2025</div>
<div class="t" style="top:1390.5px;font-size:18px;right:718.0px;font-family:'Liberation Mono',monospace;">0,000</div>
<div class="t" style="top:1390.5px;font-size:18px;left:3130.0px;font-family:'Liberation Mono',monospace;">?</div>
<div class="t" style="top:1418.5px;font-size:19px;left:1220.0px;">-</div>
<div class="t" style="top:1418.5px;font-size:19px;left:1272.0px;transform:scaleX(0.895);transform-origin:left 0;">4,0</div>
<div class="t" style="top:1418.5px;font-size:19px;left:1492.0px;transform:scaleX(0.895);transform-origin:left 0;">6020010</div>
<div class="t" style="top:1418.5px;font-size:19px;right:2009.0px;">?</div>
<div class="t" style="top:1418.5px;font-size:19px;left:1983.0px;transform:scaleX(1.029);transform-origin:left 0;">Komplettübernahme</div>
<div class="t" style="top:1418.5px;font-size:19px;left:2251.0px;transform:scaleX(0.965);transform-origin:left 0;">neu</div>
<div class="t" style="top:1418.5px;font-size:19px;left:2806.0px;transform:scaleX(0.895);transform-origin:left 0;">13.06.2025</div>
<div class="t" style="top:1420.8px;font-size:18px;right:718.0px;font-family:'Liberation Mono',monospace;">0,000</div>
<div class="t" style="top:1420.8px;font-size:18px;right:544.0px;font-family:'Liberation Mono',monospace;">100,00</div>
<div class="t" style="top:1448.9px;font-size:19px;left:1220.0px;">-</div>
<div class="t" style="top:1448.9px;font-size:19px;right:2009.0px;transform:scaleX(0.895);transform-origin:right 0;">50</div>
<div class="t" style="top:1448.9px;font-size:19px;left:1983.0px;transform:scaleX(1.029);transform-origin:left 0;">Komplettübernahme</div>
<div class="t" style="top:1448.9px;font-size:19px;left:2251.0px;transform:scaleX(0.965);transform-origin:left 0;">neu</div>
<div class="t" style="top:1448.9px;font-size:19px;left:2806.0px;transform:scaleX(0.895);transform-origin:left 0;">13.06.2025</div>
<div class="t" style="top:1451.2px;font-size:18px;right:718.0px;font-family:'Liberation Mono',monospace;">0,000</div>
<div class="t" style="top:1451.2px;font-size:18px;left:3130.0px;font-family:'Liberation Mono',monospace;">?</div>
<div class="t" style="top:1479.2px;font-size:19px;right:2009.0px;">?</div>
<div class="t" style="top:1479.2px;font-size:19px;left:1983.0px;transform:scaleX(1.029);transform-origin:left 0;">Komplettübernahme</div>
<div class="t" style="top:1479.2px;font-size:19px;left:2251.0px;transform:scaleX(0.965);transform-origin:left 0;">neu</div>
<div class="t" style="top:1479.2px;font-size:19px;left:2556.0px;transform:scaleX(0.895);transform-origin:left 0;">48</div>
<div class="t" style="top:1479.2px;font-size:19px;left:2806.0px;transform:scaleX(0.895);transform-origin:left 0;">13.06.2025</div>
<div class="t" style="top:1481.5px;font-size:18px;right:718.0px;font-family:'Liberation Mono',monospace;">0,000</div>
<div class="t" style="top:1481.5px;font-size:18px;left:3130.0px;font-family:'Liberation Mono',monospace;">?</div>
<div class="r" style="left:3298.0px;top:1203.0px;width:24.0px;height:543.0px;background:#f4f5f3;"></div>
<div class="r" style="left:3299.0px;top:1228.0px;width:23.0px;height:444.0px;background:#d3d3d2;"></div>
<div class="r" style="left:1198.0px;top:1746.0px;width:2099.0px;height:29.0px;background:#f5f5f4;"></div>
<div class="r" style="left:1224.0px;top:1754.0px;width:26.0px;height:23.0px;background:#d2d2d1;"></div>
<div class="r" style="left:1216px;top:1261px;width:2080px;height:30px;border:1px dotted #6d7275;box-sizing:border-box;border-top:2px solid #8a8f92;"></div>
<svg class="r" style="left:1264px;top:393px;" width="40" height="40" viewBox="0 0 40 40"><polygon points="15.42,5.72 15.71,0.46 24.29,0.46 24.58,5.72 26.86,6.66 30.78,3.16 36.84,9.22 33.34,13.14 34.28,15.42 39.54,15.71 39.54,24.29 34.28,24.58 33.34,26.86 36.84,30.78 30.78,36.84 26.86,33.34 24.58,34.28 24.29,39.54 15.71,39.54 15.42,34.28 13.14,33.34 9.22,36.84 3.16,30.78 6.66,26.86 5.72,24.58 0.46,24.29 0.46,15.71 5.72,15.42 6.66,13.14 3.16,9.22 9.22,3.16 13.14,6.66" fill="#10508a"/><circle cx="20" cy="20" r="15.5" fill="#10508a"/><circle cx="20" cy="20" r="6.5" fill="#e3e4e1"/></svg>
<svg class="r" style="left:1340px;top:393px;" width="40" height="40" viewBox="0 0 40 40"><rect x="0.5" y="1" width="39" height="38.5" fill="#10508a"/><rect x="6" y="9" width="17" height="25" fill="none" stroke="#d8ebf7" stroke-width="2.2"/><rect x="12" y="12" width="5" height="19" fill="#10508a"/><rect x="27" y="3" width="2" height="36" fill="#d8ebf7"/></svg>
<svg class="r" style="left:1414px;top:393px;" width="40" height="40" viewBox="0 0 40 40"><rect x="0" y="1" width="39" height="38.5" fill="#10508a"/><rect x="3.5" y="9" width="32" height="28.5" fill="none" stroke="#d8ebf7" stroke-width="2.2"/><rect x="14" y="9" width="2.2" height="28.5" fill="#d8ebf7"/><rect x="15" y="22.5" width="20" height="2.2" fill="#d8ebf7"/></svg>
<svg class="r" style="left:1490px;top:396px;" width="34" height="37" viewBox="0 0 34 37"><rect x="4" y="1" width="29" height="35" rx="2" fill="#10508a"/><g fill="#10508a"><circle cx="3" cy="7" r="2"/><circle cx="3" cy="13" r="2"/><circle cx="3" cy="19" r="2"/><circle cx="3" cy="25" r="2"/><circle cx="3" cy="31" r="2"/></g><circle cx="18.5" cy="9" r="3" fill="#fff"/><path d="M14 15 H21 V29 H24 V32 H13 V29 H16 V18 H14 Z" fill="#fff"/></svg>
<svg class="r" style="left:1559px;top:392px;" width="43" height="43" viewBox="0 0 43 43"><circle cx="21.5" cy="21.5" r="20.5" fill="#10508a"/><path d="M14.5 16 Q14.5 9 21.5 9 Q29 9 29 15.5 Q29 19.5 25 21.5 Q23.5 22.5 23.5 25 V26.5 H18.5 V24.5 Q18.5 20.5 22 18.5 Q24 17.3 24 15.5 Q24 13.5 21.5 13.5 Q19.3 13.5 19.3 16 Z" fill="#fff"/><circle cx="21" cy="31.5" r="3" fill="#fff"/></svg>
<svg class="r" style="left:1632px;top:392px;" width="42" height="42" viewBox="0 0 42 42"><path d="M2 2 L24 2 L27 5 V28 H23 V8 L14 4 V40 L2 36 Z" fill="#10508a"/><path d="M2 2 L14 6 V40 L2 36 Z" fill="#10508a"/><path d="M19 27 H30 V22 L40 30 L30 38 V33 H19 Z" fill="#10508a"/></svg>
<svg class="r" style="left:1193px;top:410px;" width="12" height="8" viewBox="0 0 12 8"><path d="M1 1 H11 L6 7 Z" fill="#333"/></svg>
<svg class="r" style="left:722px;top:388px;" width="52" height="40" viewBox="0 0 52 40"><path d="M9 36 Q1 20 12 9 Q20 2 30 5" fill="none" stroke="#9a9c9a" stroke-width="3"/><text x="13" y="33" font-family="Liberation Sans" font-weight="700" font-style="italic" font-size="25" fill="#24527a" textLength="36" lengthAdjust="spacingAndGlyphs">pro</text></svg>
<svg class="r" style="left:2916px;top:397px;" width="26" height="26" viewBox="0 0 26 26"><circle cx="10" cy="10" r="7.5" fill="none" stroke="#333" stroke-width="2.6"/><path d="M15.5 15.5 L23 23" stroke="#333" stroke-width="3.2" stroke-linecap="round"/></svg>
<svg class="r" style="left:3525px;top:386px;" width="210" height="54" viewBox="0 0 210 54"><text x="4" y="36" font-family="Liberation Sans" font-weight="700" font-style="italic" font-size="32" fill="#939494" textLength="68" lengthAdjust="spacingAndGlyphs">PRO</text><path d="M76 5 H118 L105 50 H64 Z" fill="#0e5a93"/><text x="76" y="36" font-family="Liberation Serif" font-style="italic" font-size="40" fill="#ffffff">α</text><text x="114" y="36" font-family="Liberation Sans" font-weight="700" font-style="italic" font-size="33" fill="#10508a" textLength="90" lengthAdjust="spacingAndGlyphs">LPHA</text></svg>
<svg class="r" style="left:689px;top:451px;" width="30" height="30" viewBox="0 0 30 30"><polygon points="15.00,2.00 18.53,11.15 28.31,11.67 20.71,17.85 23.23,27.33 15.00,22.00 6.77,27.33 9.29,17.85 1.69,11.67 11.47,11.15" fill="#2a4e6e"/></svg>
<svg class="r" style="left:841px;top:453px;" width="27" height="25" viewBox="0 0 27 25"><rect x="1" y="1" width="3" height="23" fill="#2a4e6e"/><path d="M6 1 L18 4 V10 L14 24 H6 Z" fill="#2a4e6e"/><circle cx="17" cy="15" r="8.5" fill="#2a4e6e"/><circle cx="17" cy="15" r="5.5" fill="#f5f6f4"/><circle cx="17" cy="15" r="3" fill="#2a4e6e"/></svg>
<svg class="r" style="left:1149px;top:452px;" width="24" height="21" viewBox="0 0 24 21"><path d="M1 10.5 L12 1 V20 Z M11 10.5 L22 1 V20 Z" fill="#10508a"/></svg>
<svg class="r" style="left:692px;top:496px;" width="22" height="25" viewBox="0 0 22 25"><path d="M2 1 L20 12.5 L2 24 Z" fill="#10508a"/></svg>
<svg class="r" style="left:1136px;top:495px;" width="28" height="26" viewBox="0 0 28 26"><path d="M4 4 L24 22 M24 4 L4 22" stroke="#10508a" stroke-width="5.5" stroke-linecap="round"/></svg>
<svg class="r" style="left:683px;top:545px;" width="27" height="34" viewBox="0 0 27 34"><rect x="0" y="6" width="25" height="8" fill="#ffffff"/><rect x="3" y="2" width="3" height="6" fill="#ffffff"/><rect x="19" y="2" width="3" height="6" fill="#ffffff"/><g fill="#bfe0f7"><rect x="1" y="16" width="4" height="3"/><rect x="7" y="16" width="4" height="3"/><rect x="13" y="16" width="4" height="3"/><rect x="19" y="16" width="4" height="3"/><rect x="1" y="22" width="4" height="3"/><rect x="13" y="22" width="4" height="3"/><rect x="1" y="28" width="4" height="3"/><rect x="7" y="28" width="4" height="3"/></g><rect x="7" y="22" width="5" height="4" fill="#7fd13b"/><rect x="17" y="26" width="6" height="5" fill="#3aa84a"/></svg>
<svg class="r" style="left:683px;top:616px;" width="27" height="29" viewBox="0 0 27 29"><rect x="1" y="2" width="24" height="26" fill="none" stroke="#d9dee2" stroke-width="2"/><rect x="1" y="1" width="24" height="6" fill="#e9edf0"/></svg>
<svg class="r" style="left:1134px;top:1454px;" width="28" height="27" viewBox="0 0 28 27"><circle cx="14" cy="8" r="7" fill="#10508a"/><path d="M1 26 Q1 16 8 14.5 Q14 18 20 14.5 Q27 16 27 26 Z" fill="#10508a"/></svg>
<svg class="r" style="left:688px;top:1500px;" width="30" height="29" viewBox="0 0 30 29"><rect x="1" y="3" width="27" height="25" fill="#10508a"/><rect x="5" y="0" width="3" height="6" fill="#10508a"/><rect x="21" y="0" width="3" height="6" fill="#10508a"/><rect x="3" y="10.0" width="4" height="3.5" fill="#dfe9f1"/><rect x="9" y="10.0" width="4" height="3.5" fill="#dfe9f1"/><rect x="15" y="10.0" width="4" height="3.5" fill="#dfe9f1"/><rect x="21" y="10.0" width="4" height="3.5" fill="#dfe9f1"/><rect x="3" y="15.5" width="4" height="3.5" fill="#dfe9f1"/><rect x="9" y="15.5" width="4" height="3.5" fill="#dfe9f1"/><rect x="15" y="15.5" width="4" height="3.5" fill="#dfe9f1"/><rect x="21" y="15.5" width="4" height="3.5" fill="#dfe9f1"/><rect x="3" y="21.0" width="4" height="3.5" fill="#dfe9f1"/><rect x="9" y="21.0" width="4" height="3.5" fill="#dfe9f1"/><rect x="15" y="21.0" width="4" height="3.5" fill="#dfe9f1"/><rect x="21" y="21.0" width="4" height="3.5" fill="#dfe9f1"/></svg>
<svg class="r" style="left:1096px;top:1501px;" width="27" height="27" viewBox="0 0 27 27"><path d="M4 11 Q6 4 13 4 Q18 4 21 8" fill="none" stroke="#10508a" stroke-width="4"/><path d="M16 9 L25 10 L24 1 Z" fill="#10508a"/><path d="M22 15 Q20 22 13 22 Q8 22 5 18" fill="none" stroke="#10508a" stroke-width="4"/><path d="M10 17 L1 16 L2 25 Z" fill="#10508a"/></svg>
<svg class="r" style="left:1134px;top:1501px;" width="27" height="27" viewBox="0 0 27 27"><polygon points="11.07,4.32 11.37,0.68 15.63,0.68 15.93,4.32 18.27,5.29 21.06,2.92 24.08,5.94 21.71,8.73 22.68,11.07 26.32,11.37 26.32,15.63 22.68,15.93 21.71,18.27 24.08,21.06 21.06,24.08 18.27,21.71 15.93,22.68 15.63,26.32 11.37,26.32 11.07,22.68 8.73,21.71 5.94,24.08 2.92,21.06 5.29,18.27 4.32,15.93 0.68,15.63 0.68,11.37 4.32,11.07 5.29,8.73 2.92,5.94 5.94,2.92 8.73,5.29" fill="#10508a"/><circle cx="13.5" cy="13.5" r="9.8" fill="#10508a"/><circle cx="13.5" cy="13.5" r="4.5" fill="#f6f7f5"/></svg>
<svg class="r" style="left:1547px;top:458px;" width="17" height="15" viewBox="0 0 17 15"><path d="M2.5 2 L14.5 13 M14.5 2 L2.5 13" stroke="#1e1e1e" stroke-width="3"/></svg>
<svg class="r" style="left:1690px;top:457px;" width="17" height="15" viewBox="0 0 17 15"><path d="M2.5 2 L14.5 13 M14.5 2 L2.5 13" stroke="#1e1e1e" stroke-width="3"/></svg>
<svg class="r" style="left:3214px;top:498px;" width="28" height="22" viewBox="0 0 28 22"><rect x="10" y="2" width="15" height="11" fill="none" stroke="#fff" stroke-width="3.2"/><rect x="2" y="10" width="14" height="10" fill="#fff"/><rect x="6" y="13" width="6" height="4" fill="none"/></svg>
<svg class="r" style="left:3258px;top:498px;" width="23" height="22" viewBox="0 0 23 22"><rect x="2.5" y="2.5" width="18" height="16" fill="none" stroke="#fff" stroke-width="4"/></svg>
<svg class="r" style="left:3300px;top:498px;" width="23" height="22" viewBox="0 0 23 22"><path d="M3 2 L20 20 M20 2 L3 20" stroke="#fff" stroke-width="4.2"/></svg>
<svg class="r" style="left:3214px;top:958px;" width="28" height="22" viewBox="0 0 28 22"><rect x="10" y="2" width="15" height="11" fill="none" stroke="#fff" stroke-width="3.2"/><rect x="2" y="10" width="14" height="10" fill="#fff"/><rect x="6" y="13" width="6" height="4" fill="none"/></svg>
<svg class="r" style="left:3258px;top:958px;" width="23" height="22" viewBox="0 0 23 22"><rect x="2.5" y="2.5" width="18" height="16" fill="none" stroke="#fff" stroke-width="4"/></svg>
<svg class="r" style="left:3300px;top:958px;" width="23" height="22" viewBox="0 0 23 22"><path d="M3 2 L20 20 M20 2 L3 20" stroke="#fff" stroke-width="4.2"/></svg>
<svg class="r" style="left:1204px;top:577px;" width="28" height="24" viewBox="0 0 28 24"><path d="M1 4 H8 L10 6 H22 V9 H6 L2 22 H1 Z" fill="#36525f"/><path d="M6 10 H27 L21 23 H1 Z" fill="#36525f"/></svg>
<svg class="r" style="left:1244px;top:576px;" width="27" height="27" viewBox="0 0 27 27"><path d="M1 1 H22 L26 5 V26 H1 Z" fill="#8e9091"/><rect x="6" y="1" width="13" height="8" fill="#c9cccd"/><rect x="13" y="2" width="4" height="5" fill="#8e9091"/><rect x="5" y="14" width="17" height="2" fill="#c9cccd"/></svg>
<svg class="r" style="left:1284px;top:576px;" width="26" height="27" viewBox="0 0 26 27"><rect x="1" y="3" width="24" height="3" fill="#36525f"/><rect x="9" y="0" width="8" height="3" fill="#36525f"/><path d="M3 8 H23 V26 H3 Z" fill="#36525f"/><g fill="#c8d3d8"><rect x="7.5" y="11" width="1.8" height="12"/><rect x="12.1" y="11" width="1.8" height="12"/><rect x="16.7" y="11" width="1.8" height="12"/></g></svg>
<svg class="r" style="left:1323px;top:576px;" width="28" height="26" viewBox="0 0 28 26"><path d="M4 3 L24 23 M24 3 L4 23" stroke="#8e9091" stroke-width="5.5"/></svg>
<svg class="r" style="left:1364px;top:576px;" width="26" height="26" viewBox="0 0 26 26"><rect x="1" y="1" width="24" height="3" fill="#36525f"/><path d="M2 6 H24 L16 14 V25 L10 21 V14 Z" fill="#36525f"/></svg>
<svg class="r" style="left:1404px;top:576px;" width="27" height="27" viewBox="0 0 27 27"><path d="M4 11 Q6 4 13 4 Q18 4 21 8" fill="none" stroke="#36525f" stroke-width="4"/><path d="M16 9 L25 10 L24 1 Z" fill="#36525f"/><path d="M22 15 Q20 22 13 22 Q8 22 5 18" fill="none" stroke="#36525f" stroke-width="4"/><path d="M10 17 L1 16 L2 25 Z" fill="#36525f"/></svg>
<svg class="r" style="left:2248px;top:578px;" width="29" height="23" viewBox="0 0 29 23"><path d="M2 3 Q12 -1 20 4 L27 11 L19 22 H1 L8 12 H18 L15 8 Q10 5 2 7 Z" fill="#36525f"/><path d="M9 15 H17 L15 18 H7 Z" fill="#dfe8ec"/></svg>
<svg class="r" style="left:2289px;top:576px;" width="27" height="27" viewBox="0 0 27 27"><rect x="6" y="1" width="14" height="8" fill="#36525f"/><rect x="1" y="9" width="25" height="12" fill="#36525f"/><rect x="6" y="17" width="15" height="9" fill="#36525f"/><rect x="6" y="16" width="15" height="1.5" fill="#c9d6dc"/><rect x="6" y="21" width="15" height="1.2" fill="#c9d6dc"/></svg>
<svg class="r" style="left:2329px;top:576px;" width="26" height="27" viewBox="0 0 26 27"><path d="M3 1 H24 L25 26 H1 Z" fill="#36525f"/><path d="M6 5 H21 L23 14 Q19 22 13 22 Q7 22 3 14 Z" fill="#dbe6ea"/><path d="M11.5 7 H14.5 V11 H18.5 V14 H14.5 V18 H11.5 V14 H7.5 V11 H11.5 Z" fill="#36525f"/></svg>
<svg class="r" style="left:3169px;top:578px;" width="28" height="24" viewBox="0 0 28 24"><rect x="1" y="1" width="4" height="22" fill="#8f979b"/><path d="M26 1 V23 L5 12 Z" fill="#8f979b"/></svg>
<svg class="r" style="left:3214px;top:578px;" width="24" height="24" viewBox="0 0 24 24"><path d="M23 1 V23 L1 12 Z" fill="#8f979b"/></svg>
<svg class="r" style="left:3253px;top:578px;" width="22" height="24" viewBox="0 0 22 24"><path d="M1 1 V23 L21 12 Z" fill="#8f979b"/></svg>
<svg class="r" style="left:3291px;top:578px;" width="28" height="24" viewBox="0 0 28 24"><rect x="22" y="1" width="4" height="22" fill="#8f979b"/><path d="M1 1 V23 L22 12 Z" fill="#8f979b"/></svg>
<svg class="r" style="left:1205px;top:1037px;" width="23" height="27" viewBox="0 0 23 27"><path d="M1 1 H16 L22 7 V26 H1 Z" fill="#2f5c7c"/><path d="M16 1 V7 H22" fill="#bcd0dc"/><rect x="1" y="21" width="21" height="2" fill="#1d3a4f"/></svg>
<svg class="r" style="left:1243px;top:1037px;" width="28" height="27" viewBox="0 0 28 27"><circle cx="14" cy="13.5" r="5" fill="#36525f"/><path d="M14 11 L10 1 H18 Z M14 16 L10 26 H18 Z M11 13.5 L1 9 V18 Z M17 13.5 L27 9 V18 Z" fill="#36525f"/></svg>
<svg class="r" style="left:1282px;top:1037px;" width="29" height="27" viewBox="0 0 29 27"><circle cx="14.5" cy="13.5" r="8" fill="none" stroke="#36525f" stroke-width="3"/><circle cx="14.5" cy="13.5" r="4" fill="#36525f"/><path d="M10 2 H19 L14.5 7 Z M10 25 H19 L14.5 20 Z M1 9 V18 L6 13.5 Z M28 9 V18 L23 13.5 Z" fill="#36525f"/></svg>
<svg class="r" style="left:1324px;top:1039px;" width="28" height="24" viewBox="0 0 28 24"><path d="M1 4 H8 L10 6 H22 V9 H6 L2 22 H1 Z" fill="#36525f"/><path d="M6 10 H27 L21 23 H1 Z" fill="#36525f"/></svg>
<svg class="r" style="left:1363px;top:1037px;" width="27" height="27" viewBox="0 0 27 27"><path d="M1 1 H22 L26 5 V26 H1 Z" fill="#8e9091"/><rect x="6" y="1" width="13" height="8" fill="#c9cccd"/><rect x="13" y="2" width="4" height="5" fill="#8e9091"/><rect x="5" y="14" width="17" height="2" fill="#c9cccd"/></svg>
<svg class="r" style="left:1405px;top:1037px;" width="26" height="27" viewBox="0 0 26 27"><rect x="1" y="3" width="24" height="3" fill="#36525f"/><rect x="9" y="0" width="8" height="3" fill="#36525f"/><path d="M3 8 H23 V26 H3 Z" fill="#36525f"/><g fill="#c8d3d8"><rect x="7.5" y="11" width="1.8" height="12"/><rect x="12.1" y="11" width="1.8" height="12"/><rect x="16.7" y="11" width="1.8" height="12"/></g></svg>
<svg class="r" style="left:1443px;top:1037px;" width="28" height="26" viewBox="0 0 28 26"><path d="M4 3 L24 23 M24 3 L4 23" stroke="#8e9091" stroke-width="5.5"/></svg>
<svg class="r" style="left:1483px;top:1037px;" width="27" height="27" viewBox="0 0 27 27"><path d="M4 11 Q6 4 13 4 Q18 4 21 8" fill="none" stroke="#36525f" stroke-width="4"/><path d="M16 9 L25 10 L24 1 Z" fill="#36525f"/><path d="M22 15 Q20 22 13 22 Q8 22 5 18" fill="none" stroke="#36525f" stroke-width="4"/><path d="M10 17 L1 16 L2 25 Z" fill="#36525f"/></svg>
<svg class="r" style="left:2327px;top:1040px;" width="29" height="23" viewBox="0 0 29 23"><path d="M2 3 Q12 -1 20 4 L27 11 L19 22 H1 L8 12 H18 L15 8 Q10 5 2 7 Z" fill="#36525f"/><path d="M9 15 H17 L15 18 H7 Z" fill="#dfe8ec"/></svg>
<svg class="r" style="left:3169px;top:1040px;" width="28" height="24" viewBox="0 0 28 24"><rect x="1" y="1" width="4" height="22" fill="#3c5765"/><path d="M26 1 V23 L5 12 Z" fill="#3c5765"/></svg>
<svg class="r" style="left:3214px;top:1040px;" width="24" height="24" viewBox="0 0 24 24"><path d="M23 1 V23 L1 12 Z" fill="#3c5765"/></svg>
<svg class="r" style="left:3253px;top:1040px;" width="22" height="24" viewBox="0 0 22 24"><path d="M1 1 V23 L21 12 Z" fill="#3c5765"/></svg>
<svg class="r" style="left:3291px;top:1040px;" width="28" height="24" viewBox="0 0 28 24"><rect x="22" y="1" width="4" height="22" fill="#3c5765"/><path d="M1 1 V23 L22 12 Z" fill="#3c5765"/></svg>
<svg class="r" style="left:1449px;top:640px;" width="16" height="10" viewBox="0 0 16 10"><path d="M1 9 L8 1 L15 9 Z" fill="#2f6aa5"/></svg>
<svg class="r" style="left:3303px;top:635px;" width="16" height="13" viewBox="0 0 16 13"><path d="M2 10 L8 3 L14 10" fill="none" stroke="#444" stroke-width="3"/></svg>
<svg class="r" style="left:3303px;top:887px;" width="16" height="13" viewBox="0 0 16 13"><path d="M2 3 L8 10 L14 3" fill="none" stroke="#444" stroke-width="3"/></svg>
<svg class="r" style="left:1198px;top:912px;" width="13" height="16" viewBox="0 0 13 16"><path d="M10 2 L3 8 L10 14" fill="none" stroke="#444" stroke-width="3"/></svg>
<svg class="r" style="left:3278px;top:912px;" width="13" height="16" viewBox="0 0 13 16"><path d="M3 2 L10 8 L3 14" fill="none" stroke="#444" stroke-width="3"/></svg>
<svg class="r" style="left:3303px;top:1213px;" width="16" height="13" viewBox="0 0 16 13"><path d="M2 10 L8 3 L14 10" fill="none" stroke="#444" stroke-width="3"/></svg>
<svg class="r" style="left:3303px;top:1731px;" width="16" height="13" viewBox="0 0 16 13"><path d="M2 3 L8 10 L14 3" fill="none" stroke="#444" stroke-width="3"/></svg>
<svg class="r" style="left:1199px;top:1755px;" width="13" height="16" viewBox="0 0 13 16"><path d="M10 2 L3 8 L10 14" fill="none" stroke="#444" stroke-width="3"/></svg>
<svg class="r" style="left:3278px;top:1755px;" width="13" height="16" viewBox="0 0 13 16"><path d="M3 2 L10 8 L3 14" fill="none" stroke="#444" stroke-width="3"/></svg>
<div class="r" style="left:1199.0px;top:658.0px;width:15.0px;height:30.0px;background:#b9bcbe;"></div>
<svg class="r" style="left:1201px;top:666px;" width="10" height="14" viewBox="0 0 10 14"><path d="M2 1 L8 7 L2 13 Z" fill="#f0f0f0"/></svg>
<div class="r" style="left:1199.0px;top:1261.0px;width:15.0px;height:30.0px;background:#b9bcbe;"></div>
<svg class="r" style="left:1201px;top:1269px;" width="10" height="14" viewBox="0 0 10 14"><path d="M2 1 L8 7 L2 13 Z" fill="#f0f0f0"/></svg>
<svg class="r" style="left:1800px;top:1274px;" width="56" height="80" viewBox="0 0 56 80"><defs><filter id="cs" x="-30%" y="-30%" width="160%" height="160%"><feGaussianBlur stdDeviation="3"/></filter></defs><path d="M10 9 V66 L25 55 L31 73 L42 74 L36 52 L51 51 Z" fill="#000" opacity=".35" filter="url(#cs)" transform="translate(3,2)"/><path d="M8 6.6 V63 L23 52 L28.5 69.6 L39.5 71 L33 49.7 L47.8 48 Z" fill="#fff" stroke="#2b2b2b" stroke-width="2.8" stroke-linejoin="round"/></svg>
</div>
<div id="refl"><div class="in">
<div class="r" style="left:688.0px;top:376.0px;width:3049.0px;height:8.0px;background:rgba(224,228,231,.7);"></div>
<div class="r" style="left:688.0px;top:384.0px;width:3049.0px;height:98.0px;background:#e2e3e0;"></div>
<div class="r" style="left:826.0px;top:452.0px;width:2.0px;height:29.0px;background:#cfd0cd;"></div>
<div class="r" style="left:829.0px;top:448.0px;width:172.0px;height:34.0px;background:#f5f6f4;border:1px solid #d2d3d0;border-bottom:none;box-sizing:border-box;"></div>
<div class="t" style="top:455.9px;font-size:19px;left:727.0px;color:#333;transform:scaleX(0.972);transform-origin:left 0;">Favoriten</div>
<div class="t" style="top:455.9px;font-size:19px;left:875.0px;color:#222;font-weight:700;-webkit-text-stroke:0;transform:scaleX(0.994);transform-origin:left 0;">Programme</div>
<div class="r" style="left:683.0px;top:481.0px;width:486.0px;height:53.0px;background:#f6f7f5;border-top:2px solid #cbccc9;box-sizing:border-box;"></div>
<div class="r" style="left:726.0px;top:489.0px;width:402.0px;height:35.0px;background:#ffffff;border:1px solid #bcbdbb;box-sizing:border-box;"></div>
<div class="t" style="top:496.8px;font-size:18px;left:735.0px;color:#3a3a3a;transform:scaleX(0.987);transform-origin:left 0;">Lagerumbuchungen</div>
<div class="r" style="left:683.0px;top:534.0px;width:486.0px;height:57.0px;background:#0b7fd7;"></div>
<div class="t" style="top:541.9px;font-size:19px;left:714.0px;color:#ffffff;font-weight:700;-webkit-text-stroke:0;transform:scaleX(0.969);transform-origin:left 0;text-decoration:underline;">Lagerumbuchungen</div>
<div class="t" style="top:566.9px;font-size:19px;left:714.0px;color:#d8ebfb;transform:scaleX(1.027);transform-origin:left 0;">Materialwirtschaft / Lager</div>
<div class="r" style="left:683.0px;top:591.0px;width:486.0px;height:832.0px;background:#243f55;"></div>
<div class="t" style="top:595.9px;font-size:19px;left:714.0px;color:#eef2f5;font-weight:700;-webkit-text-stroke:0;transform:scaleX(0.969);transform-origin:left 0;text-decoration:underline;">Lagerumbuchungen</div>
<div class="t" style="top:595.9px;font-size:19px;left:898.0px;color:#eef2f5;font-weight:700;-webkit-text-stroke:0;transform:scaleX(0.989);transform-origin:left 0;">Verpackungsstruktur</div>
<div class="t" style="top:621.9px;font-size:19px;left:714.0px;color:#d5dde3;transform:scaleX(1.046);transform-origin:left 0;">Materialwirtschaft / Packmittel /</div>
<div class="t" style="top:646.9px;font-size:19px;left:714.0px;color:#d5dde3;">Verpackungsstruktur</div>
<div class="r" style="left:683.0px;top:1423.0px;width:486.0px;height:127.0px;background:#f6f7f5;"></div>
<div class="r" style="left:906.0px;top:1427.0px;width:37.0px;height:5.0px;background:repeating-linear-gradient(90deg,#9a9c9a 0 2px,transparent 2px 3px);"></div>
<div class="t" style="top:1451.2px;font-size:21px;left:693.0px;color:#333;transform:scaleX(1.057);transform-origin:left 0;">Aufgaben für Emil Zander</div>
<div class="t" style="top:1506.1px;font-size:20px;left:730.0px;color:#333;transform:scaleX(0.969);transform-origin:left 0;">14.06.2025</div>
<div class="r" style="left:683.0px;top:1550.0px;width:486.0px;height:254.0px;background:#243f55;border-bottom-left-radius:26px;"></div>
<div class="r" style="left:679.0px;top:481.0px;width:4.0px;height:1299.0px;background:rgba(246,248,250,.75);"></div>
<div class="r" style="left:1169.0px;top:482.0px;width:3.0px;height:1322.0px;background:#cdd0cf;"></div>
<div class="r" style="left:1172.0px;top:482.0px;width:12.0px;height:1322.0px;background:#e3e5e4;"></div>
<div class="r" style="left:1184.0px;top:482.0px;width:2550.0px;height:1322.0px;background:#26435a;border-bottom-right-radius:24px;"></div>
<div class="r" style="left:1184.0px;top:448.0px;width:401.0px;height:34.0px;background:#f6f7f5;"></div>
<div class="r" style="left:1184.0px;top:447.0px;width:401.0px;height:2.0px;background:#cfd0ce;"></div>
<div class="r" style="left:1585.0px;top:448.0px;width:2.0px;height:33.0px;background:#cfd0ce;"></div>
<div class="t" style="top:455.9px;font-size:19px;left:1208.0px;color:#222;font-weight:700;-webkit-text-stroke:0;transform:scaleX(0.959);transform-origin:left 0;">Übersicht Kommissioniervorschläge</div>
<div class="t" style="top:455.9px;font-size:19px;left:1610.0px;color:#444;transform:scaleX(1.012);transform-origin:left 0;">Auftrag</div>
<div class="r" style="left:828.0px;top:397.0px;width:382.0px;height:32.0px;background:#e8e9e7;border:1px solid #c4c5c3;box-sizing:border-box;"></div>
<div class="t" style="top:404.4px;font-size:19px;left:832.0px;color:#3b3b3b;transform:scaleX(1.046);transform-origin:left 0;">110 - proELECTRO AG</div>
<div class="t" style="top:403.1px;font-size:20px;left:1720.0px;color:#333;transform:scaleX(1.057);transform-origin:left 0;">Emil Zander</div>
<div class="r" style="left:2914.0px;top:393.0px;width:598.0px;height:41.0px;background:#ffffff;border:1px solid #b9bab8;box-sizing:border-box;"></div>
<div class="t" style="top:403.6px;font-size:17px;left:2947.0px;color:#222;transform:scaleX(0.934);transform-origin:left 0;">Suche</div>
<div class="r" style="left:1184.0px;top:482.0px;width:2149.0px;height:466.0px;background:#1b2b38;"></div>
<div class="r" style="left:1189.0px;top:487.0px;width:2140.0px;height:453.0px;background:#d1dde3;"></div>
<div class="r" style="left:1189.0px;top:487.0px;width:2140.0px;height:41.0px;background:#3d7798;"></div>
<div class="r" style="left:1189.0px;top:528.0px;width:2140.0px;height:4.0px;background:#b7d1e1;"></div>
<div class="t" style="top:499.1px;font-size:20px;left:1199.0px;color:#ffffff;font-weight:700;-webkit-text-stroke:0;transform:scaleX(0.982);transform-origin:left 0;">Kommissioniervorschläge</div>
<div class="r" style="left:1184.0px;top:943.0px;width:2149.0px;height:849.0px;background:#1b2b38;"></div>
<div class="r" style="left:1189.0px;top:948.0px;width:2140.0px;height:838.0px;background:#d1dde3;"></div>
<div class="r" style="left:1189.0px;top:948.0px;width:2140.0px;height:41.0px;background:#0c81d3;"></div>
<div class="r" style="left:1189.0px;top:989.0px;width:2140.0px;height:4.0px;background:#b7d1e1;"></div>
<div class="t" style="top:960.1px;font-size:20px;left:1199.0px;color:#ffffff;font-weight:700;-webkit-text-stroke:0;transform:scaleX(0.989);transform-origin:left 0;">Positionen Kommissioniervorschlag</div>
<div class="r" style="left:683.0px;top:1804.0px;width:3054.0px;height:3.0px;background:rgba(232,238,244,.85);"></div>
<div class="r" style="left:683.0px;top:1807.0px;width:3054.0px;height:26.0px;background:rgba(232,235,240,.55);"></div>
<div class="t" style="top:541.9px;font-size:19px;left:1205.0px;color:#3a3a3a;">Datei</div>
<div class="t" style="top:541.9px;font-size:19px;left:1265.0px;color:#3a3a3a;">Bearbeiten</div>
<div class="t" style="top:541.9px;font-size:19px;left:1373.0px;color:#3a3a3a;">Funktion</div>
<div class="t" style="top:541.9px;font-size:19px;left:1464.0px;color:#3a3a3a;">Extras</div>
<div class="t" style="top:541.9px;font-size:19px;left:1531.0px;color:#3a3a3a;">Stamm</div>
<div class="t" style="top:541.9px;font-size:19px;left:1607.0px;color:#3a3a3a;">Info</div>
<div class="t" style="top:1001.9px;font-size:19px;left:1205.0px;color:#3a3a3a;">Datei</div>
<div class="t" style="top:1001.9px;font-size:19px;left:1264.0px;color:#3a3a3a;">Funktion</div>
<div class="t" style="top:1001.9px;font-size:19px;left:1355.0px;color:#3a3a3a;">Extras</div>
<div class="t" style="top:1001.9px;font-size:19px;left:1421.0px;color:#3a3a3a;">Info</div>
<div class="r" style="left:1197.0px;top:621.0px;width:2130.0px;height:314.0px;background:#f7f8f6;border:1px solid #cfd6d9;box-sizing:border-box;"></div>
<div class="r" style="left:1213.0px;top:625.0px;width:2084.0px;height:32.0px;background:#fdfdfd;"></div>
<div class="r" style="left:1198.0px;top:626.0px;width:15.0px;height:30.0px;background:#f3f4f2;border-right:2px solid #cfd0ce;border-bottom:2px solid #d6d7d5;box-sizing:border-box;"></div>
<div class="r" style="left:1198.0px;top:658.0px;width:15.0px;height:28.4px;background:#f3f4f2;border-right:2px solid #cfd0ce;border-bottom:2px solid #d6d7d5;box-sizing:border-box;"></div>
<div class="r" style="left:1198.0px;top:688.4px;width:15.0px;height:28.4px;background:#f3f4f2;border-right:2px solid #cfd0ce;border-bottom:2px solid #d6d7d5;box-sizing:border-box;"></div>
<div class="r" style="left:1198.0px;top:718.7px;width:15.0px;height:28.4px;background:#f3f4f2;border-right:2px solid #cfd0ce;border-bottom:2px solid #d6d7d5;box-sizing:border-box;"></div>
<div class="r" style="left:1198.0px;top:749.0px;width:15.0px;height:28.4px;background:#f3f4f2;border-right:2px solid #cfd0ce;border-bottom:2px solid #d6d7d5;box-sizing:border-box;"></div>
<div class="r" style="left:1198.0px;top:779.4px;width:15.0px;height:28.4px;background:#f3f4f2;border-right:2px solid #cfd0ce;border-bottom:2px solid #d6d7d5;box-sizing:border-box;"></div>
<div class="r" style="left:1198.0px;top:809.8px;width:15.0px;height:28.4px;background:#f3f4f2;border-right:2px solid #cfd0ce;border-bottom:2px solid #d6d7d5;box-sizing:border-box;"></div>
<div class="r" style="left:1198.0px;top:840.1px;width:15.0px;height:28.4px;background:#f3f4f2;border-right:2px solid #cfd0ce;border-bottom:2px solid #d6d7d5;box-sizing:border-box;"></div>
<div class="r" style="left:1198.0px;top:870.5px;width:15.0px;height:28.4px;background:#f3f4f2;border-right:2px solid #cfd0ce;border-bottom:2px solid #d6d7d5;box-sizing:border-box;"></div>
<div class="r" style="left:1213.0px;top:686.4px;width:2084.0px;height:2.0px;background:#e4e6e3;"></div>
<div class="r" style="left:1213.0px;top:716.7px;width:2084.0px;height:2.0px;background:#e4e6e3;"></div>
<div class="r" style="left:1213.0px;top:747.0px;width:2084.0px;height:2.0px;background:#e4e6e3;"></div>
<div class="r" style="left:1213.0px;top:777.4px;width:2084.0px;height:2.0px;background:#e4e6e3;"></div>
<div class="r" style="left:1213.0px;top:807.8px;width:2084.0px;height:2.0px;background:#e4e6e3;"></div>
<div class="r" style="left:1213.0px;top:838.1px;width:2084.0px;height:2.0px;background:#e4e6e3;"></div>
<div class="r" style="left:1213.0px;top:868.5px;width:2084.0px;height:2.0px;background:#e4e6e3;"></div>
<div class="r" style="left:1213.0px;top:898.8px;width:2084.0px;height:2.0px;background:#e4e6e3;"></div>
<div class="r" style="left:1265.0px;top:657.0px;width:2.0px;height:242.8px;background:#e2e4e1;"></div>
<div class="r" style="left:1344.0px;top:657.0px;width:2.0px;height:242.8px;background:#e2e4e1;"></div>
<div class="r" style="left:1466.0px;top:657.0px;width:2.0px;height:242.8px;background:#e2e4e1;"></div>
<div class="r" style="left:1576.0px;top:657.0px;width:2.0px;height:242.8px;background:#e2e4e1;"></div>
<div class="r" style="left:1648.0px;top:657.0px;width:2.0px;height:242.8px;background:#e2e4e1;"></div>
<div class="r" style="left:1941.0px;top:657.0px;width:2.0px;height:242.8px;background:#e2e4e1;"></div>
<div class="r" style="left:2060.0px;top:657.0px;width:2.0px;height:242.8px;background:#e2e4e1;"></div>
<div class="r" style="left:2293.0px;top:657.0px;width:2.0px;height:242.8px;background:#e2e4e1;"></div>
<div class="r" style="left:2377.0px;top:657.0px;width:2.0px;height:242.8px;background:#e2e4e1;"></div>
<div class="r" style="left:2672.0px;top:657.0px;width:2.0px;height:242.8px;background:#e2e4e1;"></div>
<div class="r" style="left:2869.0px;top:657.0px;width:2.0px;height:242.8px;background:#e2e4e1;"></div>
<div class="r" style="left:2968.0px;top:657.0px;width:2.0px;height:242.8px;background:#e2e4e1;"></div>
<div class="r" style="left:3013.0px;top:657.0px;width:2.0px;height:242.8px;background:#e2e4e1;"></div>
<div class="r" style="left:3042.0px;top:657.0px;width:2.0px;height:242.8px;background:#e2e4e1;"></div>
<div class="r" style="left:3098.0px;top:657.0px;width:2.0px;height:242.8px;background:#e2e4e1;"></div>
<div class="r" style="left:3221.0px;top:657.0px;width:2.0px;height:242.8px;background:#e2e4e1;"></div>
<div class="r" style="left:3286.0px;top:657.0px;width:2.0px;height:242.8px;background:#e2e4e1;"></div>
<div class="r" style="left:1213.0px;top:657.0px;width:2084.0px;height:30.4px;background:#d1dde5;"></div>
<div class="t" style="top:631.9px;font-size:19px;left:1220.0px;transform:scaleX(0.995);transform-origin:left 0;">mark</div>
<div class="t" style="top:631.9px;font-size:19px;left:1269.0px;transform:scaleX(0.992);transform-origin:left 0;">Hinweis</div>
<div class="t" style="top:631.9px;font-size:19px;left:1346.0px;color:#3d7fbf;transform:scaleX(1.037);transform-origin:left 0;">KommirNr</div>
<div class="t" style="top:631.9px;font-size:19px;left:1471.0px;color:#3d7fbf;">Belegdatum</div>
<div class="t" style="top:631.9px;font-size:19px;left:1580.0px;color:#3d7fbf;transform:scaleX(0.962);transform-origin:left 0;">KoZone</div>
<div class="t" style="top:631.9px;font-size:19px;left:1651.0px;">Bezeichnung KommissZone</div>
<div class="t" style="top:631.9px;font-size:19px;left:1946.0px;color:#3d7fbf;">HBA</div>
<div class="t" style="top:631.9px;font-size:19px;left:2066.0px;color:#3d7fbf;">Kommissionierstatus</div>
<div class="t" style="top:631.9px;font-size:19px;left:2331.0px;">KoLg</div>
<div class="t" style="top:631.9px;font-size:19px;left:2381.0px;transform:scaleX(0.992);transform-origin:left 0;">Bezeichnung KommLager</div>
<div class="t" style="top:631.9px;font-size:19px;left:2675.0px;transform:scaleX(1.008);transform-origin:left 0;">Kommissionierplatz</div>
<div class="t" style="top:631.9px;font-size:19px;left:2875.0px;color:#3d7fbf;">Termin</div>
<div class="t" style="top:631.9px;font-size:19px;left:2970.0px;">#Drk</div>
<div class="t" style="top:631.9px;font-size:19px;left:3017.0px;">FN</div>
<div class="t" style="top:631.9px;font-size:19px;left:3047.0px;">#Fom</div>
<div class="t" style="top:631.9px;font-size:19px;left:3104.0px;transform:scaleX(0.943);transform-origin:left 0;">Sachbearb</div>
<div class="t" style="top:631.9px;font-size:19px;left:3225.0px;">VertGr</div>
<div class="t" style="top:631.9px;font-size:19px;left:3288.0px;">c</div>
<div class="t" style="top:663.4px;font-size:19px;right:2375.0px;transform:scaleX(0.895);transform-origin:right 0;">33</div>
<div class="t" style="top:663.4px;font-size:19px;left:1471.0px;transform:scaleX(0.895);transform-origin:left 0;">06.06.2025</div>
<div class="t" style="top:663.4px;font-size:19px;left:1580.0px;">K1</div>
<div class="t" style="top:663.4px;font-size:19px;left:1651.0px;transform:scaleX(0.973);transform-origin:left 0;">Bereitstellung Versand</div>
<div class="t" style="top:663.4px;font-size:19px;left:1946.0px;">AUF</div>
<div class="t" style="top:663.4px;font-size:19px;left:2066.0px;transform:scaleX(0.965);transform-origin:left 0;">neu</div>
<div class="t" style="top:663.4px;font-size:19px;right:1465.0px;transform:scaleX(0.895);transform-origin:right 0;">11</div>
<div class="t" style="top:663.4px;font-size:19px;left:2381.0px;transform:scaleX(0.982);transform-origin:left 0;">Kommissionierlager Versand</div>
<div class="t" style="top:663.4px;font-size:19px;left:2874.0px;transform:scaleX(0.895);transform-origin:left 0;">13.06.2025</div>
<div class="t" style="top:663.4px;font-size:19px;right:828.0px;">0</div>
<div class="t" style="top:663.4px;font-size:19px;right:797.0px;transform:scaleX(0.895);transform-origin:right 0;">50</div>
<div class="t" style="top:663.4px;font-size:19px;right:743.0px;">1</div>
<div class="t" style="top:663.4px;font-size:19px;left:3104.0px;transform:scaleX(0.975);transform-origin:left 0;">Zander</div>
<div class="t" style="top:663.4px;font-size:19px;left:3288.0px;">?</div>
<div class="r" style="left:3298.0px;top:628.0px;width:24.0px;height:271.8px;background:#f4f5f3;"></div>
<div class="r" style="left:3299.0px;top:653.0px;width:23.0px;height:149.0px;background:#d3d3d2;"></div>
<div class="r" style="left:1198.0px;top:899.8px;width:2099.0px;height:33.2px;background:#f5f5f4;"></div>
<div class="r" style="left:1224.0px;top:907.8px;width:26.0px;height:23.0px;background:#d2d2d1;"></div>
<div class="r" style="left:1196.0px;top:1082.0px;width:2130.0px;height:115.0px;background:#f8f9f7;"></div>
<div class="r" style="left:1197.0px;top:1198.0px;width:2130.0px;height:579.0px;background:#f7f8f6;border:1px solid #cfd6d9;box-sizing:border-box;"></div>
<div class="r" style="left:1213.0px;top:1200.0px;width:2084.0px;height:30.0px;background:#fdfdfd;"></div>
<div class="r" style="left:1198.0px;top:1201.0px;width:15.0px;height:28.0px;background:#f3f4f2;border-right:2px solid #cfd0ce;border-bottom:2px solid #d6d7d5;box-sizing:border-box;"></div>
<div class="r" style="left:1198.0px;top:1231.0px;width:15.0px;height:28.3px;background:#f3f4f2;border-right:2px solid #cfd0ce;border-bottom:2px solid #d6d7d5;box-sizing:border-box;"></div>
<div class="r" style="left:1198.0px;top:1261.3px;width:15.0px;height:28.3px;background:#f3f4f2;border-right:2px solid #cfd0ce;border-bottom:2px solid #d6d7d5;box-sizing:border-box;"></div>
<div class="r" style="left:1198.0px;top:1291.7px;width:15.0px;height:28.3px;background:#f3f4f2;border-right:2px solid #cfd0ce;border-bottom:2px solid #d6d7d5;box-sizing:border-box;"></div>
<div class="r" style="left:1198.0px;top:1322.0px;width:15.0px;height:28.3px;background:#f3f4f2;border-right:2px solid #cfd0ce;border-bottom:2px solid #d6d7d5;box-sizing:border-box;"></div>
<div class="r" style="left:1198.0px;top:1352.4px;width:15.0px;height:28.3px;background:#f3f4f2;border-right:2px solid #cfd0ce;border-bottom:2px solid #d6d7d5;box-sizing:border-box;"></div>
<div class="r" style="left:1198.0px;top:1382.8px;width:15.0px;height:28.3px;background:#f3f4f2;border-right:2px solid #cfd0ce;border-bottom:2px solid #d6d7d5;box-sizing:border-box;"></div>
<div class="r" style="left:1198.0px;top:1413.1px;width:15.0px;height:28.3px;background:#f3f4f2;border-right:2px solid #cfd0ce;border-bottom:2px solid #d6d7d5;box-sizing:border-box;"></div>
<div class="r" style="left:1198.0px;top:1443.5px;width:15.0px;height:28.3px;background:#f3f4f2;border-right:2px solid #cfd0ce;border-bottom:2px solid #d6d7d5;box-sizing:border-box;"></div>
<div class="r" style="left:1198.0px;top:1473.8px;width:15.0px;height:28.3px;background:#f3f4f2;border-right:2px solid #cfd0ce;border-bottom:2px solid #d6d7d5;box-sizing:border-box;"></div>
<div class="r" style="left:1198.0px;top:1504.2px;width:15.0px;height:28.3px;background:#f3f4f2;border-right:2px solid #cfd0ce;border-bottom:2px solid #d6d7d5;box-sizing:border-box;"></div>
<div class="r" style="left:1198.0px;top:1534.5px;width:15.0px;height:28.3px;background:#f3f4f2;border-right:2px solid #cfd0ce;border-bottom:2px solid #d6d7d5;box-sizing:border-box;"></div>
<div class="r" style="left:1198.0px;top:1564.8px;width:15.0px;height:28.3px;background:#f3f4f2;border-right:2px solid #cfd0ce;border-bottom:2px solid #d6d7d5;box-sizing:border-box;"></div>
<div class="r" style="left:1198.0px;top:1595.2px;width:15.0px;height:28.3px;background:#f3f4f2;border-right:2px solid #cfd0ce;border-bottom:2px solid #d6d7d5;box-sizing:border-box;"></div>
<div class="r" style="left:1198.0px;top:1625.5px;width:15.0px;height:28.3px;background:#f3f4f2;border-right:2px solid #cfd0ce;border-bottom:2px solid #d6d7d5;box-sizing:border-box;"></div>
<div class="r" style="left:1198.0px;top:1655.9px;width:15.0px;height:28.3px;background:#f3f4f2;border-right:2px solid #cfd0ce;border-bottom:2px solid #d6d7d5;box-sizing:border-box;"></div>
<div class="r" style="left:1198.0px;top:1686.2px;width:15.0px;height:28.3px;background:#f3f4f2;border-right:2px solid #cfd0ce;border-bottom:2px solid #d6d7d5;box-sizing:border-box;"></div>
<div class="r" style="left:1198.0px;top:1716.6px;width:15.0px;height:28.3px;background:#f3f4f2;border-right:2px solid #cfd0ce;border-bottom:2px solid #d6d7d5;box-sizing:border-box;"></div>
<div class="r" style="left:1213.0px;top:1259.3px;width:2084.0px;height:2.0px;background:#e4e6e3;"></div>
<div class="r" style="left:1213.0px;top:1289.7px;width:2084.0px;height:2.0px;background:#e4e6e3;"></div>
<div class="r" style="left:1213.0px;top:1320.0px;width:2084.0px;height:2.0px;background:#e4e6e3;"></div>
<div class="r" style="left:1213.0px;top:1350.4px;width:2084.0px;height:2.0px;background:#e4e6e3;"></div>
<div class="r" style="left:1213.0px;top:1380.8px;width:2084.0px;height:2.0px;background:#e4e6e3;"></div>
<div class="r" style="left:1213.0px;top:1411.1px;width:2084.0px;height:2.0px;background:#e4e6e3;"></div>
<div class="r" style="left:1213.0px;top:1441.5px;width:2084.0px;height:2.0px;background:#e4e6e3;"></div>
<div class="r" style="left:1213.0px;top:1471.8px;width:2084.0px;height:2.0px;background:#e4e6e3;"></div>
<div class="r" style="left:1213.0px;top:1502.2px;width:2084.0px;height:2.0px;background:#e4e6e3;"></div>
<div class="r" style="left:1213.0px;top:1532.5px;width:2084.0px;height:2.0px;background:#e4e6e3;"></div>
<div class="r" style="left:1213.0px;top:1562.8px;width:2084.0px;height:2.0px;background:#e4e6e3;"></div>
<div class="r" style="left:1213.0px;top:1593.2px;width:2084.0px;height:2.0px;background:#e4e6e3;"></div>
<div class="r" style="left:1213.0px;top:1623.5px;width:2084.0px;height:2.0px;background:#e4e6e3;"></div>
<div class="r" style="left:1213.0px;top:1653.9px;width:2084.0px;height:2.0px;background:#e4e6e3;"></div>
<div class="r" style="left:1213.0px;top:1684.2px;width:2084.0px;height:2.0px;background:#e4e6e3;"></div>
<div class="r" style="left:1213.0px;top:1714.6px;width:2084.0px;height:2.0px;background:#e4e6e3;"></div>
<div class="r" style="left:1213.0px;top:1745.0px;width:2084.0px;height:2.0px;background:#e4e6e3;"></div>
<div class="r" style="left:1259.0px;top:1230.0px;width:2.0px;height:516.0px;background:#e2e4e1;"></div>
<div class="r" style="left:1367.0px;top:1230.0px;width:2.0px;height:516.0px;background:#e2e4e1;"></div>
<div class="r" style="left:1487.0px;top:1230.0px;width:2.0px;height:516.0px;background:#e2e4e1;"></div>
<div class="r" style="left:1685.0px;top:1230.0px;width:2.0px;height:516.0px;background:#e2e4e1;"></div>
<div class="r" style="left:1750.0px;top:1230.0px;width:2.0px;height:516.0px;background:#e2e4e1;"></div>
<div class="r" style="left:1832.0px;top:1230.0px;width:2.0px;height:516.0px;background:#e2e4e1;"></div>
<div class="r" style="left:1875.0px;top:1230.0px;width:2.0px;height:516.0px;background:#e2e4e1;"></div>
<div class="r" style="left:1978.0px;top:1230.0px;width:2.0px;height:516.0px;background:#e2e4e1;"></div>
<div class="r" style="left:2247.0px;top:1230.0px;width:2.0px;height:516.0px;background:#e2e4e1;"></div>
<div class="r" style="left:2551.0px;top:1230.0px;width:2.0px;height:516.0px;background:#e2e4e1;"></div>
<div class="r" style="left:2640.0px;top:1230.0px;width:2.0px;height:516.0px;background:#e2e4e1;"></div>
<div class="r" style="left:2800.0px;top:1230.0px;width:2.0px;height:516.0px;background:#e2e4e1;"></div>
<div class="r" style="left:2950.0px;top:1230.0px;width:2.0px;height:516.0px;background:#e2e4e1;"></div>
<div class="r" style="left:3124.0px;top:1230.0px;width:2.0px;height:516.0px;background:#e2e4e1;"></div>
<div class="r" style="left:1213.0px;top:1260.3px;width:2084.0px;height:30.4px;background:#d1dde5;"></div>
<div class="t" style="top:1206.9px;font-size:19px;left:1233.0px;">Str</div>
<div class="t" style="top:1206.9px;font-size:19px;right:2475.0px;">Pos</div>
<div class="t" style="top:1206.9px;font-size:19px;right:2356.0px;transform:scaleX(0.908);transform-origin:right 0;">SetPos</div>
<div class="t" style="top:1206.9px;font-size:19px;left:1492.0px;transform:scaleX(0.947);transform-origin:left 0;">Teil</div>
<div class="t" style="top:1206.9px;font-size:19px;left:1689.0px;">Var</div>
<div class="t" style="top:1206.9px;font-size:19px;right:2011.0px;transform:scaleX(0.965);transform-origin:right 0;">Lagerort</div>
<div class="t" style="top:1206.9px;font-size:19px;left:1837.0px;">LBer</div>
<div class="t" style="top:1206.9px;font-size:19px;left:1880.0px;transform:scaleX(0.966);transform-origin:left 0;">Lagerplatz</div>
<div class="t" style="top:1206.9px;font-size:19px;left:1983.0px;">LKZ</div>
<div class="t" style="top:1206.9px;font-size:19px;left:2251.0px;">Kommissionierstatus</div>
<div class="t" style="top:1206.9px;font-size:19px;left:2556.0px;transform:scaleX(0.971);transform-origin:left 0;">Chargenn</div>
<div class="t" style="top:1206.9px;font-size:19px;left:2645.0px;transform:scaleX(1.041);transform-origin:left 0;">KommNr</div>
<div class="t" style="top:1206.9px;font-size:19px;left:2809.0px;transform:scaleX(1.013);transform-origin:left 0;">Bereitstelltermin</div>
<div class="t" style="top:1206.9px;font-size:19px;left:2954.0px;transform:scaleX(0.994);transform-origin:left 0;">eingelagerte Menge</div>
<div class="t" style="top:1206.9px;font-size:19px;right:544.0px;transform:scaleX(1.016);transform-origin:right 0;">offene Meng</div>
<div class="t" style="top:1236.4px;font-size:19px;left:1220.0px;">-</div>
<div class="t" style="top:1236.4px;font-size:19px;left:1272.0px;transform:scaleX(0.895);transform-origin:left 0;">1,0</div>
<div class="t" style="top:1236.4px;font-size:19px;left:1492.0px;transform:scaleX(0.895);transform-origin:left 0;">1300010</div>
<div class="t" style="top:1236.4px;font-size:19px;right:2009.0px;">?</div>
<div class="t" style="top:1236.4px;font-size:19px;left:1983.0px;transform:scaleX(1.029);transform-origin:left 0;">Komplettübernahme</div>
<div class="t" style="top:1236.4px;font-size:19px;left:2251.0px;transform:scaleX(0.965);transform-origin:left 0;">neu</div>
<div class="t" style="top:1236.4px;font-size:19px;left:2806.0px;transform:scaleX(0.895);transform-origin:left 0;">13.06.2025</div>
<div class="t" style="top:1238.7px;font-size:18px;right:718.0px;font-family:'Liberation Mono',monospace;">0,000</div>
<div class="t" style="top:1238.7px;font-size:18px;right:544.0px;font-family:'Liberation Mono',monospace;">100,00</div>
<div class="t" style="top:1266.8px;font-size:19px;right:2009.0px;">0</div>
<div class="t" style="top:1266.8px;font-size:19px;left:1983.0px;transform:scaleX(1.029);transform-origin:left 0;">Komplettübernahme</div>
<div class="t" style="top:1266.8px;font-size:19px;left:2251.0px;transform:scaleX(0.965);transform-origin:left 0;">neu</div>
<div class="t" style="top:1266.8px;font-size:19px;left:2806.0px;transform:scaleX(0.895);transform-origin:left 0;">13.06.2025</div>
<div class="t" style="top:1269.1px;font-size:18px;right:718.0px;font-family:'Liberation Mono',monospace;">0,000</div>
<div class="t" style="top:1269.1px;font-size:18px;left:3130.0px;font-family:'Liberation Mono',monospace;">?</div>
<div class="t" style="top:1297.1px;font-size:19px;left:1220.0px;">-</div>
<div class="t" style="top:1297.1px;font-size:19px;left:1272.0px;transform:scaleX(0.895);transform-origin:left 0;">2,0</div>
<div class="t" style="top:1297.1px;font-size:19px;left:1492.0px;transform:scaleX(0.895);transform-origin:left 0;">1300020</div>
<div class="t" style="top:1297.1px;font-size:19px;left:1983.0px;transform:scaleX(1.029);transform-origin:left 0;">Komplettübernahme</div>
<div class="t" style="top:1297.1px;font-size:19px;left:2251.0px;transform:scaleX(0.965);transform-origin:left 0;">neu</div>
<div class="t" style="top:1297.1px;font-size:19px;left:2806.0px;transform:scaleX(0.895);transform-origin:left 0;">13.06.2025</div>
<div class="t" style="top:1299.4px;font-size:18px;right:718.0px;font-family:'Liberation Mono',monospace;">0,000</div>
<div class="t" style="top:1299.4px;font-size:18px;right:544.0px;font-family:'Liberation Mono',monospace;">100,00</div>
<div class="t" style="top:1327.5px;font-size:19px;right:2009.0px;">0</div>
<div class="t" style="top:1327.5px;font-size:19px;left:1983.0px;transform:scaleX(1.029);transform-origin:left 0;">Komplettübernahme</div>
<div class="t" style="top:1327.5px;font-size:19px;left:2251.0px;transform:scaleX(0.965);transform-origin:left 0;">neu</div>
<div class="t" style="top:1327.5px;font-size:19px;left:2806.0px;transform:scaleX(0.895);transform-origin:left 0;">13.06.2025</div>
<div class="t" style="top:1329.8px;font-size:18px;right:718.0px;font-family:'Liberation Mono',monospace;">0,000</div>
<div class="t" style="top:1329.8px;font-size:18px;left:3130.0px;font-family:'Liberation Mono',monospace;">?</div>
<div class="t" style="top:1357.8px;font-size:19px;left:1220.0px;">-</div>
<div class="t" style="top:1357.8px;font-size:19px;left:1272.0px;transform:scaleX(0.895);transform-origin:left 0;">3,0</div>
<div class="t" style="top:1357.8px;font-size:19px;left:1492.0px;transform:scaleX(0.895);transform-origin:left 0;">1400010</div>
<div class="t" style="top:1357.8px;font-size:19px;right:2009.0px;">?</div>
<div class="t" style="top:1357.8px;font-size:19px;left:1983.0px;transform:scaleX(1.029);transform-origin:left 0;">Komplettübernahme</div>
<div class="t" style="top:1357.8px;font-size:19px;left:2251.0px;transform:scaleX(0.965);transform-origin:left 0;">neu</div>
<div class="t" style="top:1357.8px;font-size:19px;left:2806.0px;transform:scaleX(0.895);transform-origin:left 0;">13.06.2025</div>
<div class="t" style="top:1360.1px;font-size:18px;right:718.0px;font-family:'Liberation Mono',monospace;">0,000</div>
<div class="t" style="top:1360.1px;font-size:18px;right:544.0px;font-family:'Liberation Mono',monospace;">100,00</div>
<div class="t" style="top:1388.2px;font-size:19px;right:2009.0px;">0</div>
<div class="t" style="top:1388.2px;font-size:19px;left:1983.0px;transform:scaleX(1.029);transform-origin:left 0;">Komplettübernahme</div>
<div class="t" style="top:1388.2px;font-size:19px;left:2251.0px;transform:scaleX(0.965);transform-origin:left 0;">neu</div>
<div class="t" style="top:1388.2px;font-size:19px;left:2806.0px;transform:scaleX(0.895);transform-origin:left 0;">13.06.2025</div>
<div class="t" style="top:1390.5px;font-size:18px;right:718.0px;font-family:'Liberation Mono',monospace;">0,000</div>
<div class="t" style="top:1390.5px;font-size:18px;left:3130.0px;font-family:'Liberation Mono',monospace;">?</div>
<div class="t" style="top:1418.5px;font-size:19px;left:1220.0px;">-</div>
<div class="t" style="top:1418.5px;font-size:19px;left:1272.0px;transform:scaleX(0.895);transform-origin:left 0;">4,0</div>
<div class="t" style="top:1418.5px;font-size:19px;left:1492.0px;transform:scaleX(0.895);transform-origin:left 0;">6020010</div>
<div class="t" style="top:1418.5px;font-size:19px;right:2009.0px;">?</div>
<div class="t" style="top:1418.5px;font-size:19px;left:1983.0px;transform:scaleX(1.029);transform-origin:left 0;">Komplettübernahme</div>
<div class="t" style="top:1418.5px;font-size:19px;left:2251.0px;transform:scaleX(0.965);transform-origin:left 0;">neu</div>
<div class="t" style="top:1418.5px;font-size:19px;left:2806.0px;transform:scaleX(0.895);transform-origin:left 0;">13.06.2025</div>
<div class="t" style="top:1420.8px;font-size:18px;right:718.0px;font-family:'Liberation Mono',monospace;">0,000</div>
<div class="t" style="top:1420.8px;font-size:18px;right:544.0px;font-family:'Liberation Mono',monospace;">100,00</div>
<div class="t" style="top:1448.9px;font-size:19px;left:1220.0px;">-</div>
<div class="t" style="top:1448.9px;font-size:19px;right:2009.0px;transform:scaleX(0.895);transform-origin:right 0;">50</div>
<div class="t" style="top:1448.9px;font-size:19px;left:1983.0px;transform:scaleX(1.029);transform-origin:left 0;">Komplettübernahme</div>
<div class="t" style="top:1448.9px;font-size:19px;left:2251.0px;transform:scaleX(0.965);transform-origin:left 0;">neu</div>
<div class="t" style="top:1448.9px;font-size:19px;left:2806.0px;transform:scaleX(0.895);transform-origin:left 0;">13.06.2025</div>
<div class="t" style="top:1451.2px;font-size:18px;right:718.0px;font-family:'Liberation Mono',monospace;">0,000</div>
<div class="t" style="top:1451.2px;font-size:18px;left:3130.0px;font-family:'Liberation Mono',monospace;">?</div>
<div class="t" style="top:1479.2px;font-size:19px;right:2009.0px;">?</div>
<div class="t" style="top:1479.2px;font-size:19px;left:1983.0px;transform:scaleX(1.029);transform-origin:left 0;">Komplettübernahme</div>
<div class="t" style="top:1479.2px;font-size:19px;left:2251.0px;transform:scaleX(0.965);transform-origin:left 0;">neu</div>
<div class="t" style="top:1479.2px;font-size:19px;left:2556.0px;transform:scaleX(0.895);transform-origin:left 0;">48</div>
<div class="t" style="top:1479.2px;font-size:19px;left:2806.0px;transform:scaleX(0.895);transform-origin:left 0;">13.06.2025</div>
<div class="t" style="top:1481.5px;font-size:18px;right:718.0px;font-family:'Liberation Mono',monospace;">0,000</div>
<div class="t" style="top:1481.5px;font-size:18px;left:3130.0px;font-family:'Liberation Mono',monospace;">?</div>
<div class="r" style="left:3298.0px;top:1203.0px;width:24.0px;height:543.0px;background:#f4f5f3;"></div>
<div class="r" style="left:3299.0px;top:1228.0px;width:23.0px;height:444.0px;background:#d3d3d2;"></div>
<div class="r" style="left:1198.0px;top:1746.0px;width:2099.0px;height:29.0px;background:#f5f5f4;"></div>
<div class="r" style="left:1224.0px;top:1754.0px;width:26.0px;height:23.0px;background:#d2d2d1;"></div>
<div class="r" style="left:1216px;top:1261px;width:2080px;height:30px;border:1px dotted #6d7275;box-sizing:border-box;border-top:2px solid #8a8f92;"></div>
<svg class="r" style="left:1264px;top:393px;" width="40" height="40" viewBox="0 0 40 40"><polygon points="15.42,5.72 15.71,0.46 24.29,0.46 24.58,5.72 26.86,6.66 30.78,3.16 36.84,9.22 33.34,13.14 34.28,15.42 39.54,15.71 39.54,24.29 34.28,24.58 33.34,26.86 36.84,30.78 30.78,36.84 26.86,33.34 24.58,34.28 24.29,39.54 15.71,39.54 15.42,34.28 13.14,33.34 9.22,36.84 3.16,30.78 6.66,26.86 5.72,24.58 0.46,24.29 0.46,15.71 5.72,15.42 6.66,13.14 3.16,9.22 9.22,3.16 13.14,6.66" fill="#10508a"/><circle cx="20" cy="20" r="15.5" fill="#10508a"/><circle cx="20" cy="20" r="6.5" fill="#e3e4e1"/></svg>
<svg class="r" style="left:1340px;top:393px;" width="40" height="40" viewBox="0 0 40 40"><rect x="0.5" y="1" width="39" height="38.5" fill="#10508a"/><rect x="6" y="9" width="17" height="25" fill="none" stroke="#d8ebf7" stroke-width="2.2"/><rect x="12" y="12" width="5" height="19" fill="#10508a"/><rect x="27" y="3" width="2" height="36" fill="#d8ebf7"/></svg>
<svg class="r" style="left:1414px;top:393px;" width="40" height="40" viewBox="0 0 40 40"><rect x="0" y="1" width="39" height="38.5" fill="#10508a"/><rect x="3.5" y="9" width="32" height="28.5" fill="none" stroke="#d8ebf7" stroke-width="2.2"/><rect x="14" y="9" width="2.2" height="28.5" fill="#d8ebf7"/><rect x="15" y="22.5" width="20" height="2.2" fill="#d8ebf7"/></svg>
<svg class="r" style="left:1490px;top:396px;" width="34" height="37" viewBox="0 0 34 37"><rect x="4" y="1" width="29" height="35" rx="2" fill="#10508a"/><g fill="#10508a"><circle cx="3" cy="7" r="2"/><circle cx="3" cy="13" r="2"/><circle cx="3" cy="19" r="2"/><circle cx="3" cy="25" r="2"/><circle cx="3" cy="31" r="2"/></g><circle cx="18.5" cy="9" r="3" fill="#fff"/><path d="M14 15 H21 V29 H24 V32 H13 V29 H16 V18 H14 Z" fill="#fff"/></svg>
<svg class="r" style="left:1559px;top:392px;" width="43" height="43" viewBox="0 0 43 43"><circle cx="21.5" cy="21.5" r="20.5" fill="#10508a"/><path d="M14.5 16 Q14.5 9 21.5 9 Q29 9 29 15.5 Q29 19.5 25 21.5 Q23.5 22.5 23.5 25 V26.5 H18.5 V24.5 Q18.5 20.5 22 18.5 Q24 17.3 24 15.5 Q24 13.5 21.5 13.5 Q19.3 13.5 19.3 16 Z" fill="#fff"/><circle cx="21" cy="31.5" r="3" fill="#fff"/></svg>
<svg class="r" style="left:1632px;top:392px;" width="42" height="42" viewBox="0 0 42 42"><path d="M2 2 L24 2 L27 5 V28 H23 V8 L14 4 V40 L2 36 Z" fill="#10508a"/><path d="M2 2 L14 6 V40 L2 36 Z" fill="#10508a"/><path d="M19 27 H30 V22 L40 30 L30 38 V33 H19 Z" fill="#10508a"/></svg>
<svg class="r" style="left:1193px;top:410px;" width="12" height="8" viewBox="0 0 12 8"><path d="M1 1 H11 L6 7 Z" fill="#333"/></svg>
<svg class="r" style="left:722px;top:388px;" width="52" height="40" viewBox="0 0 52 40"><path d="M9 36 Q1 20 12 9 Q20 2 30 5" fill="none" stroke="#9a9c9a" stroke-width="3"/><text x="13" y="33" font-family="Liberation Sans" font-weight="700" font-style="italic" font-size="25" fill="#24527a" textLength="36" lengthAdjust="spacingAndGlyphs">pro</text></svg>
<svg class="r" style="left:2916px;top:397px;" width="26" height="26" viewBox="0 0 26 26"><circle cx="10" cy="10" r="7.5" fill="none" stroke="#333" stroke-width="2.6"/><path d="M15.5 15.5 L23 23" stroke="#333" stroke-width="3.2" stroke-linecap="round"/></svg>
<svg class="r" style="left:3525px;top:386px;" width="210" height="54" viewBox="0 0 210 54"><text x="4" y="36" font-family="Liberation Sans" font-weight="700" font-style="italic" font-size="32" fill="#939494" textLength="68" lengthAdjust="spacingAndGlyphs">PRO</text><path d="M76 5 H118 L105 50 H64 Z" fill="#0e5a93"/><text x="76" y="36" font-family="Liberation Serif" font-style="italic" font-size="40" fill="#ffffff">α</text><text x="114" y="36" font-family="Liberation Sans" font-weight="700" font-style="italic" font-size="33" fill="#10508a" textLength="90" lengthAdjust="spacingAndGlyphs">LPHA</text></svg>
<svg class="r" style="left:689px;top:451px;" width="30" height="30" viewBox="0 0 30 30"><polygon points="15.00,2.00 18.53,11.15 28.31,11.67 20.71,17.85 23.23,27.33 15.00,22.00 6.77,27.33 9.29,17.85 1.69,11.67 11.47,11.15" fill="#2a4e6e"/></svg>
<svg class="r" style="left:841px;top:453px;" width="27" height="25" viewBox="0 0 27 25"><rect x="1" y="1" width="3" height="23" fill="#2a4e6e"/><path d="M6 1 L18 4 V10 L14 24 H6 Z" fill="#2a4e6e"/><circle cx="17" cy="15" r="8.5" fill="#2a4e6e"/><circle cx="17" cy="15" r="5.5" fill="#f5f6f4"/><circle cx="17" cy="15" r="3" fill="#2a4e6e"/></svg>
<svg class="r" style="left:1149px;top:452px;" width="24" height="21" viewBox="0 0 24 21"><path d="M1 10.5 L12 1 V20 Z M11 10.5 L22 1 V20 Z" fill="#10508a"/></svg>
<svg class="r" style="left:692px;top:496px;" width="22" height="25" viewBox="0 0 22 25"><path d="M2 1 L20 12.5 L2 24 Z" fill="#10508a"/></svg>
<svg class="r" style="left:1136px;top:495px;" width="28" height="26" viewBox="0 0 28 26"><path d="M4 4 L24 22 M24 4 L4 22" stroke="#10508a" stroke-width="5.5" stroke-linecap="round"/></svg>
<svg class="r" style="left:683px;top:545px;" width="27" height="34" viewBox="0 0 27 34"><rect x="0" y="6" width="25" height="8" fill="#ffffff"/><rect x="3" y="2" width="3" height="6" fill="#ffffff"/><rect x="19" y="2" width="3" height="6" fill="#ffffff"/><g fill="#bfe0f7"><rect x="1" y="16" width="4" height="3"/><rect x="7" y="16" width="4" height="3"/><rect x="13" y="16" width="4" height="3"/><rect x="19" y="16" width="4" height="3"/><rect x="1" y="22" width="4" height="3"/><rect x="13" y="22" width="4" height="3"/><rect x="1" y="28" width="4" height="3"/><rect x="7" y="28" width="4" height="3"/></g><rect x="7" y="22" width="5" height="4" fill="#7fd13b"/><rect x="17" y="26" width="6" height="5" fill="#3aa84a"/></svg>
<svg class="r" style="left:683px;top:616px;" width="27" height="29" viewBox="0 0 27 29"><rect x="1" y="2" width="24" height="26" fill="none" stroke="#d9dee2" stroke-width="2"/><rect x="1" y="1" width="24" height="6" fill="#e9edf0"/></svg>
<svg class="r" style="left:1134px;top:1454px;" width="28" height="27" viewBox="0 0 28 27"><circle cx="14" cy="8" r="7" fill="#10508a"/><path d="M1 26 Q1 16 8 14.5 Q14 18 20 14.5 Q27 16 27 26 Z" fill="#10508a"/></svg>
<svg class="r" style="left:688px;top:1500px;" width="30" height="29" viewBox="0 0 30 29"><rect x="1" y="3" width="27" height="25" fill="#10508a"/><rect x="5" y="0" width="3" height="6" fill="#10508a"/><rect x="21" y="0" width="3" height="6" fill="#10508a"/><rect x="3" y="10.0" width="4" height="3.5" fill="#dfe9f1"/><rect x="9" y="10.0" width="4" height="3.5" fill="#dfe9f1"/><rect x="15" y="10.0" width="4" height="3.5" fill="#dfe9f1"/><rect x="21" y="10.0" width="4" height="3.5" fill="#dfe9f1"/><rect x="3" y="15.5" width="4" height="3.5" fill="#dfe9f1"/><rect x="9" y="15.5" width="4" height="3.5" fill="#dfe9f1"/><rect x="15" y="15.5" width="4" height="3.5" fill="#dfe9f1"/><rect x="21" y="15.5" width="4" height="3.5" fill="#dfe9f1"/><rect x="3" y="21.0" width="4" height="3.5" fill="#dfe9f1"/><rect x="9" y="21.0" width="4" height="3.5" fill="#dfe9f1"/><rect x="15" y="21.0" width="4" height="3.5" fill="#dfe9f1"/><rect x="21" y="21.0" width="4" height="3.5" fill="#dfe9f1"/></svg>
<svg class="r" style="left:1096px;top:1501px;" width="27" height="27" viewBox="0 0 27 27"><path d="M4 11 Q6 4 13 4 Q18 4 21 8" fill="none" stroke="#10508a" stroke-width="4"/><path d="M16 9 L25 10 L24 1 Z" fill="#10508a"/><path d="M22 15 Q20 22 13 22 Q8 22 5 18" fill="none" stroke="#10508a" stroke-width="4"/><path d="M10 17 L1 16 L2 25 Z" fill="#10508a"/></svg>
<svg class="r" style="left:1134px;top:1501px;" width="27" height="27" viewBox="0 0 27 27"><polygon points="11.07,4.32 11.37,0.68 15.63,0.68 15.93,4.32 18.27,5.29 21.06,2.92 24.08,5.94 21.71,8.73 22.68,11.07 26.32,11.37 26.32,15.63 22.68,15.93 21.71,18.27 24.08,21.06 21.06,24.08 18.27,21.71 15.93,22.68 15.63,26.32 11.37,26.32 11.07,22.68 8.73,21.71 5.94,24.08 2.92,21.06 5.29,18.27 4.32,15.93 0.68,15.63 0.68,11.37 4.32,11.07 5.29,8.73 2.92,5.94 5.94,2.92 8.73,5.29" fill="#10508a"/><circle cx="13.5" cy="13.5" r="9.8" fill="#10508a"/><circle cx="13.5" cy="13.5" r="4.5" fill="#f6f7f5"/></svg>
<svg class="r" style="left:1547px;top:458px;" width="17" height="15" viewBox="0 0 17 15"><path d="M2.5 2 L14.5 13 M14.5 2 L2.5 13" stroke="#1e1e1e" stroke-width="3"/></svg>
<svg class="r" style="left:1690px;top:457px;" width="17" height="15" viewBox="0 0 17 15"><path d="M2.5 2 L14.5 13 M14.5 2 L2.5 13" stroke="#1e1e1e" stroke-width="3"/></svg>
<svg class="r" style="left:3214px;top:498px;" width="28" height="22" viewBox="0 0 28 22"><rect x="10" y="2" width="15" height="11" fill="none" stroke="#fff" stroke-width="3.2"/><rect x="2" y="10" width="14" height="10" fill="#fff"/><rect x="6" y="13" width="6" height="4" fill="none"/></svg>
<svg class="r" style="left:3258px;top:498px;" width="23" height="22" viewBox="0 0 23 22"><rect x="2.5" y="2.5" width="18" height="16" fill="none" stroke="#fff" stroke-width="4"/></svg>
<svg class="r" style="left:3300px;top:498px;" width="23" height="22" viewBox="0 0 23 22"><path d="M3 2 L20 20 M20 2 L3 20" stroke="#fff" stroke-width="4.2"/></svg>
<svg class="r" style="left:3214px;top:958px;" width="28" height="22" viewBox="0 0 28 22"><rect x="10" y="2" width="15" height="11" fill="none" stroke="#fff" stroke-width="3.2"/><rect x="2" y="10" width="14" height="10" fill="#fff"/><rect x="6" y="13" width="6" height="4" fill="none"/></svg>
<svg class="r" style="left:3258px;top:958px;" width="23" height="22" viewBox="0 0 23 22"><rect x="2.5" y="2.5" width="18" height="16" fill="none" stroke="#fff" stroke-width="4"/></svg>
<svg class="r" style="left:3300px;top:958px;" width="23" height="22" viewBox="0 0 23 22"><path d="M3 2 L20 20 M20 2 L3 20" stroke="#fff" stroke-width="4.2"/></svg>
<svg class="r" style="left:1204px;top:577px;" width="28" height="24" viewBox="0 0 28 24"><path d="M1 4 H8 L10 6 H22 V9 H6 L2 22 H1 Z" fill="#36525f"/><path d="M6 10 H27 L21 23 H1 Z" fill="#36525f"/></svg>
<svg class="r" style="left:1244px;top:576px;" width="27" height="27" viewBox="0 0 27 27"><path d="M1 1 H22 L26 5 V26 H1 Z" fill="#8e9091"/><rect x="6" y="1" width="13" height="8" fill="#c9cccd"/><rect x="13" y="2" width="4" height="5" fill="#8e9091"/><rect x="5" y="14" width="17" height="2" fill="#c9cccd"/></svg>
<svg class="r" style="left:1284px;top:576px;" width="26" height="27" viewBox="0 0 26 27"><rect x="1" y="3" width="24" height="3" fill="#36525f"/><rect x="9" y="0" width="8" height="3" fill="#36525f"/><path d="M3 8 H23 V26 H3 Z" fill="#36525f"/><g fill="#c8d3d8"><rect x="7.5" y="11" width="1.8" height="12"/><rect x="12.1" y="11" width="1.8" height="12"/><rect x="16.7" y="11" width="1.8" height="12"/></g></svg>
<svg class="r" style="left:1323px;top:576px;" width="28" height="26" viewBox="0 0 28 26"><path d="M4 3 L24 23 M24 3 L4 23" stroke="#8e9091" stroke-width="5.5"/></svg>
<svg class="r" style="left:1364px;top:576px;" width="26" height="26" viewBox="0 0 26 26"><rect x="1" y="1" width="24" height="3" fill="#36525f"/><path d="M2 6 H24 L16 14 V25 L10 21 V14 Z" fill="#36525f"/></svg>
<svg class="r" style="left:1404px;top:576px;" width="27" height="27" viewBox="0 0 27 27"><path d="M4 11 Q6 4 13 4 Q18 4 21 8" fill="none" stroke="#36525f" stroke-width="4"/><path d="M16 9 L25 10 L24 1 Z" fill="#36525f"/><path d="M22 15 Q20 22 13 22 Q8 22 5 18" fill="none" stroke="#36525f" stroke-width="4"/><path d="M10 17 L1 16 L2 25 Z" fill="#36525f"/></svg>
<svg class="r" style="left:2248px;top:578px;" width="29" height="23" viewBox="0 0 29 23"><path d="M2 3 Q12 -1 20 4 L27 11 L19 22 H1 L8 12 H18 L15 8 Q10 5 2 7 Z" fill="#36525f"/><path d="M9 15 H17 L15 18 H7 Z" fill="#dfe8ec"/></svg>
<svg class="r" style="left:2289px;top:576px;" width="27" height="27" viewBox="0 0 27 27"><rect x="6" y="1" width="14" height="8" fill="#36525f"/><rect x="1" y="9" width="25" height="12" fill="#36525f"/><rect x="6" y="17" width="15" height="9" fill="#36525f"/><rect x="6" y="16" width="15" height="1.5" fill="#c9d6dc"/><rect x="6" y="21" width="15" height="1.2" fill="#c9d6dc"/></svg>
<svg class="r" style="left:2329px;top:576px;" width="26" height="27" viewBox="0 0 26 27"><path d="M3 1 H24 L25 26 H1 Z" fill="#36525f"/><path d="M6 5 H21 L23 14 Q19 22 13 22 Q7 22 3 14 Z" fill="#dbe6ea"/><path d="M11.5 7 H14.5 V11 H18.5 V14 H14.5 V18 H11.5 V14 H7.5 V11 H11.5 Z" fill="#36525f"/></svg>
<svg class="r" style="left:3169px;top:578px;" width="28" height="24" viewBox="0 0 28 24"><rect x="1" y="1" width="4" height="22" fill="#8f979b"/><path d="M26 1 V23 L5 12 Z" fill="#8f979b"/></svg>
<svg class="r" style="left:3214px;top:578px;" width="24" height="24" viewBox="0 0 24 24"><path d="M23 1 V23 L1 12 Z" fill="#8f979b"/></svg>
<svg class="r" style="left:3253px;top:578px;" width="22" height="24" viewBox="0 0 22 24"><path d="M1 1 V23 L21 12 Z" fill="#8f979b"/></svg>
<svg class="r" style="left:3291px;top:578px;" width="28" height="24" viewBox="0 0 28 24"><rect x="22" y="1" width="4" height="22" fill="#8f979b"/><path d="M1 1 V23 L22 12 Z" fill="#8f979b"/></svg>
<svg class="r" style="left:1205px;top:1037px;" width="23" height="27" viewBox="0 0 23 27"><path d="M1 1 H16 L22 7 V26 H1 Z" fill="#2f5c7c"/><path d="M16 1 V7 H22" fill="#bcd0dc"/><rect x="1" y="21" width="21" height="2" fill="#1d3a4f"/></svg>
<svg class="r" style="left:1243px;top:1037px;" width="28" height="27" viewBox="0 0 28 27"><circle cx="14" cy="13.5" r="5" fill="#36525f"/><path d="M14 11 L10 1 H18 Z M14 16 L10 26 H18 Z M11 13.5 L1 9 V18 Z M17 13.5 L27 9 V18 Z" fill="#36525f"/></svg>
<svg class="r" style="left:1282px;top:1037px;" width="29" height="27" viewBox="0 0 29 27"><circle cx="14.5" cy="13.5" r="8" fill="none" stroke="#36525f" stroke-width="3"/><circle cx="14.5" cy="13.5" r="4" fill="#36525f"/><path d="M10 2 H19 L14.5 7 Z M10 25 H19 L14.5 20 Z M1 9 V18 L6 13.5 Z M28 9 V18 L23 13.5 Z" fill="#36525f"/></svg>
<svg class="r" style="left:1324px;top:1039px;" width="28" height="24" viewBox="0 0 28 24"><path d="M1 4 H8 L10 6 H22 V9 H6 L2 22 H1 Z" fill="#36525f"/><path d="M6 10 H27 L21 23 H1 Z" fill="#36525f"/></svg>
<svg class="r" style="left:1363px;top:1037px;" width="27" height="27" viewBox="0 0 27 27"><path d="M1 1 H22 L26 5 V26 H1 Z" fill="#8e9091"/><rect x="6" y="1" width="13" height="8" fill="#c9cccd"/><rect x="13" y="2" width="4" height="5" fill="#8e9091"/><rect x="5" y="14" width="17" height="2" fill="#c9cccd"/></svg>
<svg class="r" style="left:1405px;top:1037px;" width="26" height="27" viewBox="0 0 26 27"><rect x="1" y="3" width="24" height="3" fill="#36525f"/><rect x="9" y="0" width="8" height="3" fill="#36525f"/><path d="M3 8 H23 V26 H3 Z" fill="#36525f"/><g fill="#c8d3d8"><rect x="7.5" y="11" width="1.8" height="12"/><rect x="12.1" y="11" width="1.8" height="12"/><rect x="16.7" y="11" width="1.8" height="12"/></g></svg>
<svg class="r" style="left:1443px;top:1037px;" width="28" height="26" viewBox="0 0 28 26"><path d="M4 3 L24 23 M24 3 L4 23" stroke="#8e9091" stroke-width="5.5"/></svg>
<svg class="r" style="left:1483px;top:1037px;" width="27" height="27" viewBox="0 0 27 27"><path d="M4 11 Q6 4 13 4 Q18 4 21 8" fill="none" stroke="#36525f" stroke-width="4"/><path d="M16 9 L25 10 L24 1 Z" fill="#36525f"/><path d="M22 15 Q20 22 13 22 Q8 22 5 18" fill="none" stroke="#36525f" stroke-width="4"/><path d="M10 17 L1 16 L2 25 Z" fill="#36525f"/></svg>
<svg class="r" style="left:2327px;top:1040px;" width="29" height="23" viewBox="0 0 29 23"><path d="M2 3 Q12 -1 20 4 L27 11 L19 22 H1 L8 12 H18 L15 8 Q10 5 2 7 Z" fill="#36525f"/><path d="M9 15 H17 L15 18 H7 Z" fill="#dfe8ec"/></svg>
<svg class="r" style="left:3169px;top:1040px;" width="28" height="24" viewBox="0 0 28 24"><rect x="1" y="1" width="4" height="22" fill="#3c5765"/><path d="M26 1 V23 L5 12 Z" fill="#3c5765"/></svg>
<svg class="r" style="left:3214px;top:1040px;" width="24" height="24" viewBox="0 0 24 24"><path d="M23 1 V23 L1 12 Z" fill="#3c5765"/></svg>
<svg class="r" style="left:3253px;top:1040px;" width="22" height="24" viewBox="0 0 22 24"><path d="M1 1 V23 L21 12 Z" fill="#3c5765"/></svg>
<svg class="r" style="left:3291px;top:1040px;" width="28" height="24" viewBox="0 0 28 24"><rect x="22" y="1" width="4" height="22" fill="#3c5765"/><path d="M1 1 V23 L22 12 Z" fill="#3c5765"/></svg>
<svg class="r" style="left:1449px;top:640px;" width="16" height="10" viewBox="0 0 16 10"><path d="M1 9 L8 1 L15 9 Z" fill="#2f6aa5"/></svg>
<svg class="r" style="left:3303px;top:635px;" width="16" height="13" viewBox="0 0 16 13"><path d="M2 10 L8 3 L14 10" fill="none" stroke="#444" stroke-width="3"/></svg>
<svg class="r" style="left:3303px;top:887px;" width="16" height="13" viewBox="0 0 16 13"><path d="M2 3 L8 10 L14 3" fill="none" stroke="#444" stroke-width="3"/></svg>
<svg class="r" style="left:1198px;top:912px;" width="13" height="16" viewBox="0 0 13 16"><path d="M10 2 L3 8 L10 14" fill="none" stroke="#444" stroke-width="3"/></svg>
<svg class="r" style="left:3278px;top:912px;" width="13" height="16" viewBox="0 0 13 16"><path d="M3 2 L10 8 L3 14" fill="none" stroke="#444" stroke-width="3"/></svg>
<svg class="r" style="left:3303px;top:1213px;" width="16" height="13" viewBox="0 0 16 13"><path d="M2 10 L8 3 L14 10" fill="none" stroke="#444" stroke-width="3"/></svg>
<svg class="r" style="left:3303px;top:1731px;" width="16" height="13" viewBox="0 0 16 13"><path d="M2 3 L8 10 L14 3" fill="none" stroke="#444" stroke-width="3"/></svg>
<svg class="r" style="left:1199px;top:1755px;" width="13" height="16" viewBox="0 0 13 16"><path d="M10 2 L3 8 L10 14" fill="none" stroke="#444" stroke-width="3"/></svg>
<svg class="r" style="left:3278px;top:1755px;" width="13" height="16" viewBox="0 0 13 16"><path d="M3 2 L10 8 L3 14" fill="none" stroke="#444" stroke-width="3"/></svg>
<div class="r" style="left:1199.0px;top:658.0px;width:15.0px;height:30.0px;background:#b9bcbe;"></div>
<svg class="r" style="left:1201px;top:666px;" width="10" height="14" viewBox="0 0 10 14"><path d="M2 1 L8 7 L2 13 Z" fill="#f0f0f0"/></svg>
<div class="r" style="left:1199.0px;top:1261.0px;width:15.0px;height:30.0px;background:#b9bcbe;"></div>
<svg class="r" style="left:1201px;top:1269px;" width="10" height="14" viewBox="0 0 10 14"><path d="M2 1 L8 7 L2 13 Z" fill="#f0f0f0"/></svg>
<svg class="r" style="left:1800px;top:1274px;" width="56" height="80" viewBox="0 0 56 80"><defs><filter id="cs2" x="-30%" y="-30%" width="160%" height="160%"><feGaussianBlur stdDeviation="3"/></filter></defs><path d="M10 9 V66 L25 55 L31 73 L42 74 L36 52 L51 51 Z" fill="#000" opacity=".35" filter="url(#cs2)" transform="translate(3,2)"/><path d="M8 6.6 V63 L23 52 L28.5 69.6 L39.5 71 L33 49.7 L47.8 48 Z" fill="#fff" stroke="#2b2b2b" stroke-width="2.8" stroke-linejoin="round"/></svg>
</div></div>
</body></html>
